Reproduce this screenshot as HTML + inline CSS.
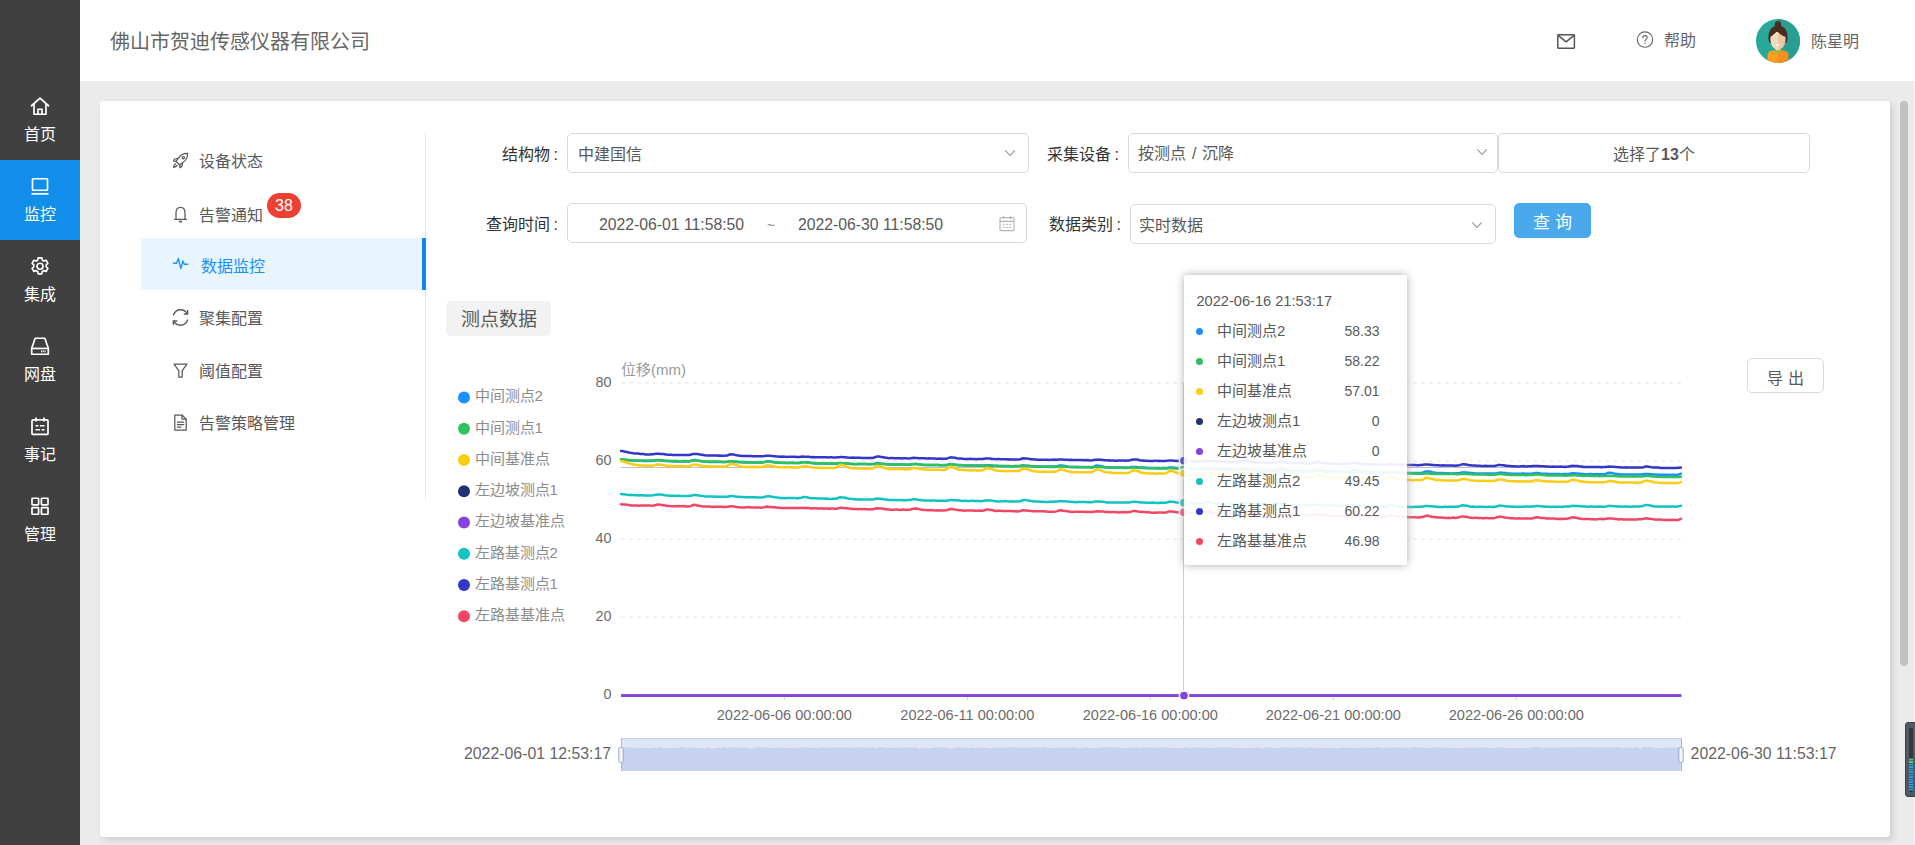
<!DOCTYPE html>
<html lang="zh-CN">
<head>
<meta charset="utf-8">
<title>数据监控</title>
<style>
*{box-sizing:border-box;margin:0;padding:0}
html,body{width:1915px;height:845px;overflow:hidden}
body{font-family:"Liberation Sans",sans-serif;background:#ebebeb;color:#595959;font-size:16px;position:relative}
.abs{position:absolute}
/* left dark rail */
#rail{position:absolute;left:0;top:0;width:80px;height:845px;background:#404040}
.ri{position:absolute;left:0;width:80px;height:80px;color:#fff;text-align:center}
.ri svg{position:absolute;left:30px;top:15.5px;width:20px;height:20.5px}
.ri span{position:absolute;left:0;width:80px;top:44px;font-size:16px;line-height:22px}
.ri.on{background:#108ee9}
/* header */
#hd{position:absolute;left:80px;top:0;width:1835px;height:81px;background:#fff}
#title{position:absolute;left:30px;top:27px;font-size:20px;line-height:30px;color:#666}

.ht{position:absolute;font-size:16px;line-height:22px;color:#666;white-space:nowrap}
/* card */
#card{position:absolute;left:100px;top:101px;width:1790px;height:736px;background:#fff;border-radius:3px;box-shadow:3px 3px 6px rgba(0,0,0,.13)}
/* inner menu */
#menu{position:absolute;left:41px;top:32px;width:285px;height:367px;border-right:1px solid #e8e8e8}
.mi{position:absolute;left:0;width:285px;height:52px;font-size:16px;color:#595959}
.mi svg{position:absolute;left:31px;top:19px;width:17px;height:17px}
.mi span{position:absolute;left:58px;top:18px;line-height:22px;white-space:nowrap}
.mi.on{background:#e9f5fe;color:#1890ff}
.mi.on:after{content:"";position:absolute;right:0;top:0;width:4px;height:52px;background:#1088e9}
.badge{position:absolute;left:126px;top:6px;width:34px;height:25px;border-radius:13px;background:#ee3f33;color:#fff;font-size:16px;line-height:25px;text-align:center}
/* form (coordinates are page-absolute, container #fx sits at 0,0) */
#fx{position:absolute;left:0;top:0;width:1915px;height:845px}
.lb{position:absolute;font-size:16px;color:#333;line-height:22px;text-align:right;width:120px;white-space:nowrap}
.sel{position:absolute;border:1px solid #d9d9d9;border-radius:5px;background:#fff;font-size:16px;color:#595959;white-space:nowrap}
.sel span{position:absolute;line-height:22px}
.chev{position:absolute;width:12px;height:8px}
.lb .c{font-style:normal;margin-left:4px}
.dt{font-size:15.75px}
.btn{position:absolute;border:1px solid #d9d9d9;border-radius:5px;background:#fff;font-size:16px;color:#595959;text-align:center;white-space:nowrap}
#tag{position:absolute;left:446px;top:301px;width:105px;height:35px;background:#f2f2f2;border-radius:5px;font-size:19px;line-height:37px;text-align:center;color:#595959}
/*TIPCSS*/
#tip{position:absolute;left:1184px;top:275px;width:223px;height:290px;background:rgba(255,255,255,.92);border-radius:3px;box-shadow:0 0 10px #aeaeae;font-size:14.4px;color:#595959}
#tip .tt{position:absolute;left:12.5px;top:16px;line-height:20px;font-size:14.6px;white-space:nowrap}
#tip .tr{position:absolute;left:0;width:223px;height:22px;line-height:22px;white-space:nowrap}
#tip .tr i{position:absolute;left:12px;top:7.5px;width:7px;height:7px;border-radius:50%}
#tip .tr span{position:absolute;left:33px;top:0;font-size:15px}
#tip .tr b{position:absolute;right:27.5px;top:0;font-weight:normal;font-size:14px}
/*/TIPCSS*/</style>
</head>
<body>
<div id="rail">
<div class="ri" style="top:80px"><svg viewBox="0 0 20 20" fill="none" stroke="#fff" stroke-width="1.7" stroke-linejoin="round" stroke-linecap="round"><path d="M1.5 9.5 L10 1.8 L18.5 9.5"/><path d="M4 8 V18 H16 V8"/><path d="M8 18 V13 H12 V18"/></svg><span>首页</span></div>
<div class="ri on" style="top:160px"><svg viewBox="0 0 20 20" fill="none" stroke="#fff" stroke-width="1.7" stroke-linejoin="round"><rect x="2.5" y="2.5" width="15" height="11.5" rx="0.8"/><path d="M1.5 17.6 H18.5"/></svg><span>监控</span></div>
<div class="ri" style="top:240px"><svg viewBox="0 0 20 20" fill="none" stroke="#fff" stroke-width="1.7" stroke-linejoin="round"><path d="M8.2 1.6 h3.6 l.5 2.3 1.6.9 2.2-.8 1.8 3.1-1.7 1.6 v1.8 l1.7 1.6-1.8 3.1-2.2-.8-1.6.9-.5 2.3 h-3.6 l-.5-2.3-1.6-.9-2.2.8-1.8-3.1 1.7-1.6 v-1.8 l-1.7-1.6 1.8-3.1 2.2.8 1.6-.9 z"/><circle cx="10" cy="10" r="3"/></svg><span>集成</span></div>
<div class="ri" style="top:320px"><svg viewBox="0 0 20 20" fill="none" stroke="#fff" stroke-width="1.7" stroke-linejoin="round"><path d="M5.2 2 H14.8 L18.3 12 V18 H1.7 V12 Z"/><path d="M1.7 12.2 H18.3"/><path d="M11 15.2 H15.5" stroke-width="1.8" stroke-dasharray="1.1 0.6"/></svg><span>网盘</span></div>
<div class="ri" style="top:400px"><svg viewBox="0 0 20 20" fill="none" stroke="#fff" stroke-width="1.7" stroke-linejoin="round"><rect x="2" y="3.6" width="16" height="14.6" rx="1"/><path d="M6 1.2 V5.2 M14 1.2 V5.2"/><path d="M5.5 9.6 H8.5 M10 9.6 H14.5 M5.5 13.4 H10 M11.5 13.4 H14.5" stroke-width="1.5"/></svg><span>事记</span></div>
<div class="ri" style="top:480px"><svg viewBox="0 0 20 20" fill="none" stroke="#fff" stroke-width="1.7" stroke-linejoin="round"><rect x="2" y="2" width="6.6" height="6.6" rx=".6"/><rect x="11.4" y="2" width="6.6" height="6.6" rx=".6"/><rect x="2" y="11.4" width="6.6" height="6.6" rx=".6"/><rect x="11.4" y="11.4" width="6.6" height="6.6" rx=".6"/></svg><span>管理</span></div>
</div>
<div id="hd"><div id="title">佛山市贺迪传感仪器有限公司</div>
<svg class="abs" style="left:1476px;top:33px;width:20px;height:17px" viewBox="0 0 20 17" fill="none" stroke="#555" stroke-width="1.5" stroke-linejoin="round"><rect x="1.8" y="1.8" width="16.6" height="13.4" rx=".6"/><path d="M2.2 2.4 L10.1 8.8 L18 2.4"/></svg>
<svg class="abs" style="left:1556px;top:31px;width:18px;height:18px" viewBox="0 0 18 18" fill="none" stroke="#666" stroke-width="1.1" stroke-linecap="round"><circle cx="9" cy="8.6" r="7.7"/><path d="M6.8 6.8 C6.8 5.4 7.8 4.6 9 4.6 C10.3 4.6 11.2 5.4 11.2 6.5 C11.2 8 9 8.2 9 10.2"/><path d="M9 12.4 V12.6" stroke-width="1.3"/></svg>
<div class="ht" style="left:1584px;top:30px">帮助</div>
<svg class="abs" style="left:1676px;top:19px;width:44px;height:44px" viewBox="0 0 44 44"><defs><clipPath id="av"><circle cx="22" cy="22" r="22"/></clipPath></defs><g clip-path="url(#av)"><rect width="44" height="44" fill="#2aa79b"/><rect x="22" width="22" height="44" fill="#289d92"/><circle cx="22" cy="5.2" r="3.2" fill="#4a2c20"/><path d="M12.4 19 C12.4 10.5 16.5 6.6 22 6.6 C27.5 6.6 31.6 10.5 31.6 19 C31.6 22 30.6 24 29.4 24 H14.6 C13.4 24 12.4 22 12.4 19 Z" fill="#4a2c20"/><rect x="19.4" y="27" width="5.2" height="6" fill="#e8c3a0"/><path d="M11.6 44 V36 C11.6 33 14 31.6 17 31.4 H22 V44 Z" fill="#f9a01f"/><path d="M32.4 44 V36 C32.4 33 30 31.6 27 31.4 H22 V44 Z" fill="#f58f1f"/><path d="M18 31.2 C19.4 33.6 24.6 33.6 26 31.2" fill="none" stroke="#6cc24a" stroke-width="1.3"/><path d="M14.4 20 C14.4 14.5 17 13 22 13 V30.6 C18 30.6 14.4 26.5 14.4 20 Z" fill="#f3d9bd"/><path d="M29.6 20 C29.6 14.5 27 13 22 13 V30.6 C26 30.6 29.6 26.5 29.6 20 Z" fill="#e9c6a5"/><path d="M14.2 18 C16 16.6 19 15 21 12 C23 15 27 17 29.8 18 C29.8 12 26 10 22 10 C18 10 14.2 12 14.2 18 Z" fill="#4a2c20"/><path d="M19.6 25.4 C20.6 27.2 23.4 27.2 24.4 25.4 Z" fill="#fff"/></g></svg>
<div class="ht" style="left:1731px;top:31px">陈星明</div>
</div>
<div id="card">
<div id="menu">
<div class="mi" style="top:0"><svg viewBox="0 0 17 17" fill="none" stroke="#595959" stroke-width="1.25" stroke-linejoin="round" stroke-linecap="round"><path d="M15.6 1.4 C11.5 1.2 8.2 3 6.2 6.6 L4 9.2 L7.8 13 L10.4 10.8 C14 8.8 15.8 5.5 15.6 1.4 Z"/><path d="M6.4 6.4 L2.6 7 L1.4 9 L4 9.4"/><path d="M10.6 10.6 L10 14.4 L8 15.6 L7.6 13"/><path d="M3.6 11.8 C2.4 12.4 1.8 13.6 1.6 15.4 C3.4 15.2 4.6 14.6 5.2 13.4"/><circle cx="11.3" cy="5.7" r="1.2"/></svg><span>设备状态</span></div>
<div class="mi" style="top:54px"><svg viewBox="0 0 17 17" fill="none" stroke="#595959" stroke-width="1.25" stroke-linejoin="round" stroke-linecap="round"><path d="M4 13.4 V7 C4 3.6 5.8 1.4 8.5 1.4 C11.2 1.4 13 3.6 13 7 V13.4"/><path d="M2.6 13.4 H14.4"/><path d="M7.5 15.6 H9.5" stroke-width="1.6"/></svg><span>告警通知</span><div class="badge">38</div></div>
<div class="mi on" style="top:105px"><svg style="top:17px" viewBox="0 0 17 17" fill="none" stroke="#1890ff" stroke-width="1.35" stroke-linejoin="round" stroke-linecap="round"><path d="M1.6 8.2 H4.6 L6.4 3.4 L8.8 13.6 L10.9 6 L12.2 9.2 H15.8"/></svg><span style="left:60px">数据监控</span></div>
<div class="mi" style="top:157px"><svg viewBox="0 0 17 17" fill="none" stroke="#595959" stroke-width="1.25" stroke-linejoin="round" stroke-linecap="round" style="left:30px;top:18px;width:19px;height:19px"><path d="M2.2 6.2 C3.2 3.4 5.6 1.6 8.5 1.6 C11.2 1.6 13.4 3 14.6 5.2"/><path d="M14.8 10.8 C13.8 13.6 11.4 15.4 8.5 15.4 C5.8 15.4 3.6 14 2.4 11.8"/><path d="M14.9 2.4 V5.4 H11.9"/><path d="M2.1 14.6 V11.6 H5.1"/></svg><span>聚集配置</span></div>
<div class="mi" style="top:210px"><svg viewBox="0 0 17 17" fill="none" stroke="#595959" stroke-width="1.25" stroke-linejoin="round" stroke-linecap="round"><path d="M2 2.2 H15 L10.2 8.6 V15 H6.8 V8.6 Z"/></svg><span>阈值配置</span></div>
<div class="mi" style="top:262px"><svg viewBox="0 0 17 17" fill="none" stroke="#595959" stroke-width="1.25" stroke-linejoin="round" stroke-linecap="round"><path d="M2.8 1 H10 L14.2 5.2 V16 H2.8 Z"/><path d="M10 1 V5.2 H14.2"/><path d="M5.4 8.2 H11.6 M5.4 10.6 H11.6 M5.4 13 H9"/></svg><span>告警策略管理</span></div>
</div>
</div>
<div id="fx">
<div class="lb" style="left:438px;top:144px">结构物<i class="c">:</i></div>
<div class="sel" style="left:567px;top:133px;width:462px;height:40px"><span style="left:10px;top:10px">中建国信</span><svg class="chev" style="left:436px;top:15px" viewBox="0 0 12 8" fill="none" stroke="#999" stroke-width="1.1"><path d="M1.2 1.4 L6 6.4 L10.8 1.4"/></svg></div>
<div class="lb" style="left:999px;top:144px">采集设备<i class="c">:</i></div>
<div class="sel" style="left:1128px;top:133px;width:370px;height:40px"><span style="left:9px;top:9px;word-spacing:1.5px">按测点 / 沉降</span><svg class="chev" style="left:347px;top:14px" viewBox="0 0 12 8" fill="none" stroke="#999" stroke-width="1.1"><path d="M1.2 1.4 L6 6.4 L10.8 1.4"/></svg></div>
<div class="btn" style="left:1498px;top:133px;width:312px;height:40px;line-height:42px">选择了<b style="font-weight:600">13</b>个</div>
<div class="lb" style="left:438px;top:214px">查询时间<i class="c">:</i></div>
<div class="sel" style="left:567px;top:203px;width:460px;height:40px"><span class="dt" style="left:31px;top:10px">2022-06-01 11:58:50</span><span style="left:199px;top:10px;color:#8c8c8c;font-size:14px">~</span><span class="dt" style="left:230px;top:10px">2022-06-30 11:58:50</span>
<svg class="abs" style="left:431px;top:11px;width:16px;height:17px" viewBox="0 0 16 17" fill="none" stroke="#b3b3b3" stroke-width="1.1"><rect x="1" y="2.6" width="14" height="13" rx="1"/><path d="M1 6.4 H15 M4.6 .8 V4 M11.4 .8 V4"/><path d="M4 9.4 H5.6 M7.2 9.4 H8.8 M10.4 9.4 H12 M4 12.4 H5.6 M7.2 12.4 H8.8 M10.4 12.4 H12" stroke-width="1.2"/></svg></div>
<div class="lb" style="left:1001px;top:214px">数据类别<i class="c">:</i></div>
<div class="sel" style="left:1130px;top:204px;width:366px;height:40px"><span style="left:8px;top:10px">实时数据</span><svg class="chev" style="left:340px;top:16px" viewBox="0 0 12 8" fill="none" stroke="#999" stroke-width="1.1"><path d="M1.2 1.4 L6 6.4 L10.8 1.4"/></svg></div>
<div class="btn" style="left:1514px;top:203px;width:77px;height:35px;line-height:37px;background:#4aa8ed;border-color:#4aa8ed;color:#fff;font-size:17px">查 询</div>
<div id="tag">测点数据</div>
<div class="btn" style="left:1747px;top:358px;width:77px;height:35px;line-height:40px">导 出</div>
</div>
<div class="abs" style="left:1914px;top:81px;width:1px;height:764px;background:#f6f6f6"></div>
<div class="abs" style="left:1900px;top:101px;width:8px;height:565px;border-radius:4px;background:#c1c1c1"></div>
<div class="abs" style="left:1905px;top:722px;width:14px;height:75px;border-radius:3px;background:#505a64;border:1px solid #3a424b"></div>
<div class="abs" style="left:1909px;top:728px;width:4px;height:64px;border-radius:1px;background:#2e333b"></div>
<svg class="abs" style="left:1909px;top:728px;width:4px;height:64px" viewBox="0 0 4 64"><rect x="0" y="0.60" width="4" height="1.9" fill="#353b44"/><rect x="0" y="3.10" width="4" height="1.9" fill="#353b44"/><rect x="0" y="5.60" width="4" height="1.9" fill="#353b44"/><rect x="0" y="8.10" width="4" height="1.9" fill="#353b44"/><rect x="0" y="10.60" width="4" height="1.9" fill="#353b44"/><rect x="0" y="13.10" width="4" height="1.9" fill="#353b44"/><rect x="0" y="15.60" width="4" height="1.9" fill="#353b44"/><rect x="0" y="18.10" width="4" height="1.9" fill="#353b44"/><rect x="0" y="20.60" width="4" height="1.9" fill="#353b44"/><rect x="0" y="23.10" width="4" height="1.9" fill="#353b44"/><rect x="0" y="25.60" width="4" height="1.9" fill="#353b44"/><rect x="0" y="28.10" width="4" height="1.9" fill="#353b44"/><rect x="0" y="30.60" width="4" height="1.9" fill="#62c08f"/><rect x="0" y="33.10" width="4" height="1.9" fill="#62c08f"/><rect x="0" y="35.60" width="4" height="1.9" fill="#2f9fe2"/><rect x="0" y="38.10" width="4" height="1.9" fill="#2f9fe2"/><rect x="0" y="40.60" width="4" height="1.9" fill="#2f9fe2"/><rect x="0" y="43.10" width="4" height="1.9" fill="#2f9fe2"/><rect x="0" y="45.60" width="4" height="1.9" fill="#2f9fe2"/><rect x="0" y="48.10" width="4" height="1.9" fill="#2f9fe2"/><rect x="0" y="50.60" width="4" height="1.9" fill="#2f9fe2"/><rect x="0" y="53.10" width="4" height="1.9" fill="#2f9fe2"/><rect x="0" y="55.60" width="4" height="1.9" fill="#2f9fe2"/><rect x="0" y="58.10" width="4" height="1.9" fill="#2f9fe2"/><rect x="0" y="60.60" width="4" height="1.9" fill="#2f9fe2"/></svg>








<!--CHART--><svg id="chart" class="abs" style="left:0;top:0" width="1915" height="845" viewBox="0 0 1915 845" font-family="Liberation Sans, sans-serif">
<g font-size="15" fill="#8c8c8c">
<circle cx="464" cy="397.4" r="6" fill="#1890ff"/><text x="474.5" y="401.2">中间测点2</text>
<circle cx="464" cy="428.7" r="6" fill="#2fc25b"/><text x="474.5" y="432.5">中间测点1</text>
<circle cx="464" cy="459.9" r="6" fill="#facc14"/><text x="474.5" y="463.7">中间基准点</text>
<circle cx="464" cy="491.2" r="6" fill="#223273"/><text x="474.5" y="495.0">左边坡测点1</text>
<circle cx="464" cy="522.5" r="6" fill="#8543e0"/><text x="474.5" y="526.3">左边坡基准点</text>
<circle cx="464" cy="553.8" r="6" fill="#13c2c2"/><text x="474.5" y="557.5">左路基测点2</text>
<circle cx="464" cy="585.0" r="6" fill="#3436c7"/><text x="474.5" y="588.8">左路基测点1</text>
<circle cx="464" cy="616.3" r="6" fill="#f04864"/><text x="474.5" y="620.1">左路基基准点</text>
</g>
<text x="621" y="374.7" font-size="15" fill="#999">位移(mm)</text>
<g stroke="#e4e4e4" stroke-width="1" stroke-dasharray="4 4" fill="none">
<path d="M621 382.9 H1681"/>
<path d="M621 461.0 H1681"/>
<path d="M621 539.1 H1681"/>
<path d="M621 617.2 H1681"/>
</g>
<g font-size="14.4" fill="#6b6b6b" text-anchor="end">
<text x="611.5" y="387.2">80</text>
<text x="611.5" y="465.2">60</text>
<text x="611.5" y="543.2">40</text>
<text x="611.5" y="621.2">20</text>
<text x="611.5" y="699.2">0</text>
</g>
<path d="M621 695.5 H1681" stroke="#ccc" stroke-width="1"/>
<g stroke="#ccc" stroke-width="1">
<path d="M784.3 695 V700"/>
<path d="M967.3 695 V700"/>
<path d="M1150.3 695 V700"/>
<path d="M1333.3 695 V700"/>
<path d="M1516.3 695 V700"/>
</g>
<g font-size="14.55" fill="#6b6b6b" text-anchor="middle">
<text x="784.3" y="719.6">2022-06-06 00:00:00</text>
<text x="967.3" y="719.6">2022-06-11 00:00:00</text>
<text x="1150.3" y="719.6">2022-06-16 00:00:00</text>
<text x="1333.3" y="719.6">2022-06-21 00:00:00</text>
<text x="1516.3" y="719.6">2022-06-26 00:00:00</text>
</g>
<path d="M621 467.5 H1681" stroke="#bfbfbf" stroke-width="1"/>
<path d="M1183.5 383 V695" stroke="#ccc" stroke-width="1"/>
<g fill="none" stroke-width="2.5" stroke-linejoin="round" stroke-linecap="round" transform="translate(0,0.7)">
<path d="M621.0 458.7 L622.5 458.7 L624.0 458.9 L625.6 459.2 L627.1 459.4 L628.6 459.6 L630.1 459.8 L631.7 459.8 L633.2 459.9 L634.7 460.0 L636.2 460.1 L637.8 460.0 L639.3 460.1 L640.8 460.1 L642.3 460.2 L643.9 460.2 L645.4 460.2 L646.9 460.3 L648.4 460.2 L650.0 460.2 L651.5 460.3 L653.0 460.1 L654.5 460.0 L656.1 459.6 L657.6 459.6 L659.1 459.7 L660.6 459.8 L662.2 460.0 L663.7 460.1 L665.2 460.3 L666.7 460.4 L668.3 460.5 L669.8 460.5 L671.3 460.6 L672.8 460.7 L674.4 460.7 L675.9 460.7 L677.4 460.6 L678.9 460.7 L680.5 460.7 L682.0 460.9 L683.5 460.9 L685.0 460.8 L686.6 460.8 L688.1 460.8 L689.6 460.6 L691.1 460.3 L692.7 459.7 L694.2 459.4 L695.7 459.4 L697.2 459.8 L698.8 460.0 L700.3 460.2 L701.8 460.5 L703.3 460.8 L704.9 460.8 L706.4 461.0 L707.9 461.1 L709.4 461.2 L711.0 461.3 L712.5 461.3 L714.0 461.2 L715.5 461.2 L717.1 461.2 L718.6 461.3 L720.1 461.4 L721.6 461.3 L723.2 461.2 L724.7 461.2 L726.2 461.2 L727.7 461.1 L729.3 460.9 L730.8 460.7 L732.3 460.7 L733.8 460.9 L735.4 461.0 L736.9 461.2 L738.4 461.5 L739.9 461.6 L741.5 461.6 L743.0 461.7 L744.5 461.7 L746.0 461.6 L747.6 461.8 L749.1 461.8 L750.6 461.9 L752.1 461.9 L753.7 461.8 L755.2 461.8 L756.7 461.7 L758.2 461.8 L759.8 461.8 L761.3 461.7 L762.8 461.6 L764.3 461.3 L765.9 460.9 L767.4 460.6 L768.9 460.6 L770.4 460.8 L772.0 461.1 L773.5 461.4 L775.0 461.5 L776.5 461.9 L778.1 462.1 L779.6 462.0 L781.1 462.1 L782.6 462.1 L784.2 462.2 L785.7 462.1 L787.2 462.3 L788.7 462.4 L790.3 462.4 L791.8 462.4 L793.3 462.3 L794.8 462.3 L796.4 462.3 L797.9 462.3 L799.4 462.4 L800.9 462.1 L802.5 461.6 L804.0 461.5 L805.5 461.6 L807.0 461.7 L808.6 461.9 L810.1 462.0 L811.6 462.3 L813.1 462.6 L814.7 462.7 L816.2 462.8 L817.7 462.7 L819.2 462.7 L820.8 462.7 L822.3 462.8 L823.8 462.9 L825.3 462.9 L826.9 462.9 L828.4 462.8 L829.9 463.0 L831.4 463.1 L833.0 463.1 L834.5 463.1 L836.0 463.1 L837.5 462.9 L839.1 462.6 L840.6 462.4 L842.1 462.5 L843.6 462.5 L845.2 462.5 L846.7 462.7 L848.2 462.8 L849.7 463.1 L851.3 463.3 L852.8 463.2 L854.3 463.4 L855.8 463.5 L857.4 463.5 L858.9 463.4 L860.4 463.3 L861.9 463.3 L863.5 463.3 L865.0 463.3 L866.5 463.4 L868.0 463.5 L869.6 463.6 L871.1 463.5 L872.6 463.5 L874.1 463.2 L875.7 462.6 L877.2 462.4 L878.7 462.5 L880.2 462.7 L881.8 463.0 L883.3 463.1 L884.8 463.2 L886.3 463.5 L887.9 463.6 L889.4 463.7 L890.9 463.9 L892.4 463.8 L894.0 463.8 L895.5 463.9 L897.0 463.9 L898.5 463.8 L900.1 463.8 L901.6 463.8 L903.1 463.9 L904.6 464.0 L906.2 463.9 L907.7 464.0 L909.2 464.1 L910.7 463.9 L912.3 463.6 L913.8 463.5 L915.3 463.4 L916.8 463.4 L918.4 463.8 L919.9 463.9 L921.4 464.0 L922.9 464.2 L924.5 464.2 L926.0 464.3 L927.5 464.4 L929.0 464.3 L930.6 464.2 L932.1 464.2 L933.6 464.2 L935.1 464.3 L936.7 464.3 L938.2 464.3 L939.7 464.3 L941.2 464.5 L942.8 464.4 L944.3 464.4 L945.8 464.4 L947.3 464.2 L948.9 463.7 L950.4 463.6 L951.9 463.6 L953.4 463.7 L955.0 463.9 L956.5 464.0 L958.0 464.2 L959.5 464.4 L961.1 464.4 L962.6 464.6 L964.1 464.6 L965.6 464.7 L967.2 464.8 L968.7 464.8 L970.2 464.8 L971.7 464.8 L973.3 464.9 L974.8 465.0 L976.3 464.8 L977.8 464.9 L979.4 464.9 L980.9 464.9 L982.4 464.9 L983.9 464.8 L985.5 464.5 L987.0 464.5 L988.5 464.6 L990.0 464.6 L991.6 464.7 L993.1 464.9 L994.6 465.0 L996.1 465.1 L997.7 465.1 L999.2 465.2 L1000.7 465.2 L1002.2 465.4 L1003.8 465.4 L1005.3 465.4 L1006.8 465.5 L1008.3 465.4 L1009.9 465.4 L1011.4 465.5 L1012.9 465.5 L1014.4 465.4 L1016.0 465.3 L1017.5 465.4 L1019.0 465.3 L1020.5 465.1 L1022.1 464.8 L1023.6 464.8 L1025.1 465.0 L1026.6 465.1 L1028.2 465.1 L1029.7 465.3 L1031.2 465.5 L1032.7 465.5 L1034.3 465.7 L1035.8 465.8 L1037.3 465.7 L1038.8 465.9 L1040.4 465.8 L1041.9 465.8 L1043.4 465.9 L1044.9 466.0 L1046.5 465.8 L1048.0 465.8 L1049.5 465.9 L1051.0 465.9 L1052.6 465.8 L1054.1 465.8 L1055.6 465.9 L1057.1 465.5 L1058.7 465.1 L1060.2 464.9 L1061.7 464.9 L1063.2 465.0 L1064.8 465.3 L1066.3 465.6 L1067.8 465.7 L1069.3 466.0 L1070.9 466.2 L1072.4 466.3 L1073.9 466.2 L1075.4 466.2 L1077.0 466.1 L1078.5 466.3 L1080.0 466.2 L1081.5 466.2 L1083.1 466.3 L1084.6 466.4 L1086.1 466.5 L1087.6 466.4 L1089.2 466.3 L1090.7 466.5 L1092.2 466.4 L1093.7 466.0 L1095.3 465.2 L1096.8 464.8 L1098.3 465.0 L1099.8 465.2 L1101.4 465.4 L1102.9 465.9 L1104.4 466.2 L1105.9 466.5 L1107.5 466.5 L1109.0 466.7 L1110.5 466.6 L1112.0 466.8 L1113.6 466.8 L1115.1 466.7 L1116.6 466.8 L1118.1 466.9 L1119.7 466.8 L1121.2 466.8 L1122.7 466.8 L1124.2 466.8 L1125.8 466.8 L1127.3 466.8 L1128.8 466.7 L1130.4 466.6 L1131.9 466.3 L1133.4 466.2 L1134.9 466.4 L1136.5 466.4 L1138.0 466.6 L1139.5 466.7 L1141.0 466.8 L1142.6 466.8 L1144.1 466.9 L1145.6 467.0 L1147.1 467.1 L1148.7 467.2 L1150.2 467.2 L1151.7 467.2 L1153.2 467.4 L1154.8 467.2 L1156.3 467.4 L1157.8 467.4 L1159.3 467.4 L1160.9 467.5 L1162.4 467.4 L1163.9 467.4 L1165.4 467.4 L1167.0 467.3 L1168.5 466.9 L1170.0 466.8 L1171.5 466.8 L1173.1 466.9 L1174.6 467.0 L1176.1 467.2 L1177.6 467.2 L1179.2 467.3 L1180.7 467.4 L1182.2 467.6 L1183.7 467.6 L1185.3 467.6 L1186.8 467.6 L1188.3 467.8 L1189.8 467.9 L1191.4 467.9 L1192.9 467.9 L1194.4 467.8 L1195.9 467.9 L1197.5 467.9 L1199.0 467.9 L1200.5 467.9 L1202.0 467.8 L1203.6 467.7 L1205.1 467.2 L1206.6 466.9 L1208.1 466.9 L1209.7 467.2 L1211.2 467.4 L1212.7 467.6 L1214.2 467.8 L1215.8 468.0 L1217.3 468.2 L1218.8 468.3 L1220.3 468.3 L1221.9 468.4 L1223.4 468.3 L1224.9 468.4 L1226.4 468.4 L1228.0 468.5 L1229.5 468.4 L1231.0 468.4 L1232.5 468.5 L1234.1 468.6 L1235.6 468.7 L1237.1 468.7 L1238.6 468.7 L1240.2 468.3 L1241.7 467.6 L1243.2 467.3 L1244.7 467.3 L1246.3 467.5 L1247.8 467.9 L1249.3 468.2 L1250.8 468.5 L1252.4 468.8 L1253.9 468.9 L1255.4 469.1 L1256.9 469.3 L1258.5 469.3 L1260.0 469.3 L1261.5 469.4 L1263.0 469.3 L1264.6 469.3 L1266.1 469.4 L1267.6 469.5 L1269.1 469.5 L1270.7 469.6 L1272.2 469.6 L1273.7 469.6 L1275.2 469.5 L1276.8 469.2 L1278.3 468.6 L1279.8 468.2 L1281.3 468.3 L1282.9 468.5 L1284.4 468.7 L1285.9 469.2 L1287.4 469.4 L1289.0 469.6 L1290.5 469.8 L1292.0 469.9 L1293.5 469.9 L1295.1 469.8 L1296.6 470.0 L1298.1 470.1 L1299.6 470.1 L1301.2 470.1 L1302.7 470.1 L1304.2 470.0 L1305.7 470.2 L1307.3 470.1 L1308.8 470.1 L1310.3 470.1 L1311.8 470.2 L1313.4 469.9 L1314.9 469.5 L1316.4 469.4 L1317.9 469.4 L1319.5 469.6 L1321.0 469.8 L1322.5 470.0 L1324.0 470.3 L1325.6 470.4 L1327.1 470.6 L1328.6 470.5 L1330.1 470.5 L1331.7 470.5 L1333.2 470.7 L1334.7 470.7 L1336.2 470.8 L1337.8 470.7 L1339.3 470.7 L1340.8 470.7 L1342.3 470.9 L1343.9 471.0 L1345.4 471.0 L1346.9 470.9 L1348.4 470.8 L1350.0 470.4 L1351.5 469.7 L1353.0 469.2 L1354.5 469.5 L1356.1 469.6 L1357.6 470.1 L1359.1 470.5 L1360.6 470.7 L1362.2 470.9 L1363.7 471.2 L1365.2 471.4 L1366.7 471.4 L1368.3 471.4 L1369.8 471.4 L1371.3 471.5 L1372.8 471.5 L1374.4 471.5 L1375.9 471.5 L1377.4 471.6 L1378.9 471.7 L1380.5 471.6 L1382.0 471.8 L1383.5 471.7 L1385.0 471.8 L1386.6 471.7 L1388.1 471.3 L1389.6 471.3 L1391.1 471.3 L1392.7 471.3 L1394.2 471.4 L1395.7 471.6 L1397.2 471.8 L1398.8 471.8 L1400.3 471.9 L1401.8 472.0 L1403.3 472.0 L1404.9 472.2 L1406.4 472.1 L1407.9 472.2 L1409.4 472.3 L1411.0 472.2 L1412.5 472.3 L1414.0 472.3 L1415.5 472.4 L1417.1 472.3 L1418.6 472.3 L1420.1 472.2 L1421.6 472.3 L1423.2 471.8 L1424.7 471.1 L1426.2 470.7 L1427.7 470.7 L1429.3 470.8 L1430.8 471.1 L1432.3 471.6 L1433.8 471.8 L1435.4 472.2 L1436.9 472.2 L1438.4 472.3 L1439.9 472.4 L1441.5 472.3 L1443.0 472.4 L1444.5 472.5 L1446.0 472.6 L1447.6 472.6 L1449.1 472.6 L1450.6 472.7 L1452.1 472.7 L1453.7 472.6 L1455.2 472.7 L1456.7 472.5 L1458.2 472.5 L1459.8 472.3 L1461.3 471.9 L1462.8 471.7 L1464.3 471.7 L1465.9 471.7 L1467.4 472.1 L1468.9 472.1 L1470.4 472.3 L1472.0 472.4 L1473.5 472.5 L1475.0 472.7 L1476.5 472.8 L1478.1 472.7 L1479.6 472.8 L1481.1 472.7 L1482.6 472.8 L1484.2 472.7 L1485.7 472.7 L1487.2 472.7 L1488.7 472.7 L1490.3 472.8 L1491.8 472.8 L1493.3 472.8 L1494.8 472.8 L1496.4 472.7 L1497.9 472.4 L1499.4 472.1 L1500.9 472.1 L1502.5 472.1 L1504.0 472.3 L1505.5 472.4 L1507.0 472.6 L1508.6 472.7 L1510.1 472.8 L1511.6 473.0 L1513.1 473.1 L1514.7 473.0 L1516.2 473.0 L1517.7 473.0 L1519.2 473.0 L1520.8 473.0 L1522.3 472.9 L1523.8 472.9 L1525.3 473.1 L1526.9 473.0 L1528.4 473.1 L1529.9 473.1 L1531.4 473.1 L1533.0 472.8 L1534.5 472.5 L1536.0 472.3 L1537.5 472.4 L1539.1 472.5 L1540.6 472.8 L1542.1 473.0 L1543.6 473.1 L1545.2 473.0 L1546.7 473.0 L1548.2 473.2 L1549.7 473.3 L1551.3 473.3 L1552.8 473.3 L1554.3 473.2 L1555.8 473.2 L1557.4 473.4 L1558.9 473.4 L1560.4 473.5 L1561.9 473.5 L1563.5 473.4 L1565.0 473.3 L1566.5 473.2 L1568.0 473.2 L1569.6 473.1 L1571.1 472.8 L1572.6 472.6 L1574.1 472.6 L1575.7 472.8 L1577.2 472.9 L1578.7 473.0 L1580.2 473.1 L1581.8 473.3 L1583.3 473.3 L1584.8 473.5 L1586.3 473.6 L1587.9 473.5 L1589.4 473.4 L1590.9 473.4 L1592.4 473.5 L1594.0 473.6 L1595.5 473.5 L1597.0 473.4 L1598.5 473.5 L1600.1 473.6 L1601.6 473.6 L1603.1 473.5 L1604.6 473.5 L1606.2 473.0 L1607.7 472.3 L1609.2 472.0 L1610.7 472.2 L1612.3 472.4 L1613.8 472.8 L1615.3 473.0 L1616.8 473.2 L1618.4 473.4 L1619.9 473.7 L1621.4 473.8 L1622.9 473.7 L1624.5 473.7 L1626.0 473.7 L1627.5 473.8 L1629.0 473.8 L1630.6 473.8 L1632.1 473.9 L1633.6 474.0 L1635.1 473.9 L1636.7 473.8 L1638.2 473.8 L1639.7 473.8 L1641.2 473.8 L1642.8 473.6 L1644.3 473.4 L1645.8 473.2 L1647.3 473.2 L1648.9 473.3 L1650.4 473.6 L1651.9 473.6 L1653.4 473.8 L1655.0 473.8 L1656.5 473.9 L1658.0 474.0 L1659.5 474.0 L1661.1 474.1 L1662.6 474.1 L1664.1 474.0 L1665.6 474.0 L1667.2 474.0 L1668.7 474.1 L1670.2 474.2 L1671.7 474.1 L1673.3 474.1 L1674.8 474.1 L1676.3 474.2 L1677.8 474.0 L1679.4 473.6 L1680.9 473.0" stroke="#1890ff"/>
<path d="M621.0 458.9 L622.5 458.9 L624.0 459.0 L625.6 459.2 L627.1 459.3 L628.6 459.3 L630.1 459.3 L631.7 459.4 L633.2 459.6 L634.7 459.6 L636.2 459.7 L637.8 459.8 L639.3 459.7 L640.8 459.7 L642.3 459.8 L643.9 459.8 L645.4 459.8 L646.9 459.9 L648.4 459.8 L650.0 459.8 L651.5 459.8 L653.0 459.8 L654.5 459.7 L656.1 459.4 L657.6 459.3 L659.1 459.2 L660.6 459.3 L662.2 459.5 L663.7 459.8 L665.2 460.0 L666.7 460.0 L668.3 460.1 L669.8 460.1 L671.3 460.2 L672.8 460.3 L674.4 460.3 L675.9 460.3 L677.4 460.4 L678.9 460.5 L680.5 460.5 L682.0 460.5 L683.5 460.4 L685.0 460.4 L686.6 460.4 L688.1 460.5 L689.6 460.4 L691.1 460.2 L692.7 459.9 L694.2 459.7 L695.7 459.7 L697.2 459.8 L698.8 460.1 L700.3 460.2 L701.8 460.5 L703.3 460.7 L704.9 460.8 L706.4 460.8 L707.9 460.7 L709.4 460.7 L711.0 460.8 L712.5 460.9 L714.0 460.9 L715.5 460.9 L717.1 460.9 L718.6 461.0 L720.1 461.1 L721.6 461.1 L723.2 461.2 L724.7 461.2 L726.2 461.0 L727.7 460.9 L729.3 460.6 L730.8 460.5 L732.3 460.5 L733.8 460.7 L735.4 460.7 L736.9 460.9 L738.4 461.0 L739.9 461.1 L741.5 461.3 L743.0 461.4 L744.5 461.4 L746.0 461.4 L747.6 461.6 L749.1 461.5 L750.6 461.5 L752.1 461.6 L753.7 461.6 L755.2 461.7 L756.7 461.6 L758.2 461.6 L759.8 461.7 L761.3 461.8 L762.8 461.8 L764.3 461.4 L765.9 461.0 L767.4 460.8 L768.9 460.8 L770.4 461.1 L772.0 461.3 L773.5 461.6 L775.0 461.7 L776.5 461.9 L778.1 461.9 L779.6 461.9 L781.1 462.1 L782.6 462.2 L784.2 462.1 L785.7 462.1 L787.2 462.2 L788.7 462.1 L790.3 462.1 L791.8 462.1 L793.3 462.1 L794.8 462.2 L796.4 462.2 L797.9 462.3 L799.4 462.2 L800.9 461.9 L802.5 461.6 L804.0 461.5 L805.5 461.5 L807.0 461.7 L808.6 461.8 L810.1 462.1 L811.6 462.3 L813.1 462.3 L814.7 462.4 L816.2 462.5 L817.7 462.6 L819.2 462.7 L820.8 462.6 L822.3 462.6 L823.8 462.7 L825.3 462.7 L826.9 462.7 L828.4 462.7 L829.9 462.9 L831.4 462.8 L833.0 462.9 L834.5 462.9 L836.0 462.8 L837.5 462.8 L839.1 462.7 L840.6 462.5 L842.1 462.5 L843.6 462.7 L845.2 462.7 L846.7 462.7 L848.2 463.0 L849.7 463.0 L851.3 463.2 L852.8 463.2 L854.3 463.3 L855.8 463.2 L857.4 463.2 L858.9 463.1 L860.4 463.2 L861.9 463.3 L863.5 463.4 L865.0 463.3 L866.5 463.4 L868.0 463.4 L869.6 463.4 L871.1 463.4 L872.6 463.3 L874.1 463.3 L875.7 463.3 L877.2 463.1 L878.7 463.2 L880.2 463.3 L881.8 463.5 L883.3 463.4 L884.8 463.4 L886.3 463.6 L887.9 463.8 L889.4 463.8 L890.9 463.7 L892.4 463.8 L894.0 463.8 L895.5 463.9 L897.0 463.9 L898.5 463.9 L900.1 463.9 L901.6 463.9 L903.1 463.9 L904.6 463.9 L906.2 464.0 L907.7 464.1 L909.2 463.9 L910.7 463.7 L912.3 463.3 L913.8 463.2 L915.3 463.2 L916.8 463.3 L918.4 463.5 L919.9 463.8 L921.4 464.0 L922.9 464.0 L924.5 464.1 L926.0 464.3 L927.5 464.2 L929.0 464.3 L930.6 464.3 L932.1 464.3 L933.6 464.4 L935.1 464.4 L936.7 464.4 L938.2 464.4 L939.7 464.5 L941.2 464.5 L942.8 464.5 L944.3 464.5 L945.8 464.5 L947.3 464.2 L948.9 464.0 L950.4 463.8 L951.9 463.9 L953.4 464.1 L955.0 464.3 L956.5 464.4 L958.0 464.5 L959.5 464.6 L961.1 464.6 L962.6 464.6 L964.1 464.7 L965.6 464.7 L967.2 464.8 L968.7 464.9 L970.2 464.8 L971.7 464.9 L973.3 464.9 L974.8 465.0 L976.3 465.1 L977.8 465.1 L979.4 465.0 L980.9 465.0 L982.4 465.0 L983.9 465.1 L985.5 464.9 L987.0 464.9 L988.5 465.0 L990.0 465.1 L991.6 465.2 L993.1 465.1 L994.6 465.3 L996.1 465.3 L997.7 465.4 L999.2 465.5 L1000.7 465.4 L1002.2 465.5 L1003.8 465.5 L1005.3 465.4 L1006.8 465.4 L1008.3 465.5 L1009.9 465.5 L1011.4 465.6 L1012.9 465.5 L1014.4 465.6 L1016.0 465.6 L1017.5 465.6 L1019.0 465.6 L1020.5 465.4 L1022.1 465.1 L1023.6 465.0 L1025.1 465.0 L1026.6 465.1 L1028.2 465.2 L1029.7 465.3 L1031.2 465.6 L1032.7 465.8 L1034.3 465.9 L1035.8 465.8 L1037.3 466.0 L1038.8 465.9 L1040.4 465.9 L1041.9 466.0 L1043.4 466.0 L1044.9 466.1 L1046.5 466.1 L1048.0 466.1 L1049.5 466.2 L1051.0 466.1 L1052.6 466.2 L1054.1 466.2 L1055.6 466.2 L1057.1 466.1 L1058.7 465.8 L1060.2 465.8 L1061.7 465.8 L1063.2 465.9 L1064.8 466.0 L1066.3 466.1 L1067.8 466.2 L1069.3 466.3 L1070.9 466.3 L1072.4 466.4 L1073.9 466.4 L1075.4 466.5 L1077.0 466.6 L1078.5 466.6 L1080.0 466.6 L1081.5 466.6 L1083.1 466.5 L1084.6 466.5 L1086.1 466.5 L1087.6 466.6 L1089.2 466.6 L1090.7 466.7 L1092.2 466.8 L1093.7 466.5 L1095.3 466.3 L1096.8 466.3 L1098.3 466.2 L1099.8 466.3 L1101.4 466.4 L1102.9 466.5 L1104.4 466.7 L1105.9 466.7 L1107.5 466.9 L1109.0 467.0 L1110.5 466.9 L1112.0 467.0 L1113.6 467.0 L1115.1 467.0 L1116.6 467.1 L1118.1 467.1 L1119.7 467.1 L1121.2 467.0 L1122.7 467.2 L1124.2 467.3 L1125.8 467.3 L1127.3 467.3 L1128.8 467.2 L1130.4 467.0 L1131.9 466.9 L1133.4 466.9 L1134.9 466.9 L1136.5 467.0 L1138.0 467.1 L1139.5 467.3 L1141.0 467.4 L1142.6 467.4 L1144.1 467.5 L1145.6 467.5 L1147.1 467.5 L1148.7 467.5 L1150.2 467.5 L1151.7 467.5 L1153.2 467.6 L1154.8 467.6 L1156.3 467.6 L1157.8 467.8 L1159.3 467.7 L1160.9 467.7 L1162.4 467.8 L1163.9 467.8 L1165.4 467.8 L1167.0 467.8 L1168.5 467.5 L1170.0 467.5 L1171.5 467.5 L1173.1 467.5 L1174.6 467.7 L1176.1 467.9 L1177.6 468.0 L1179.2 467.9 L1180.7 468.1 L1182.2 468.1 L1183.7 468.1 L1185.3 468.2 L1186.8 468.2 L1188.3 468.1 L1189.8 468.1 L1191.4 468.2 L1192.9 468.1 L1194.4 468.2 L1195.9 468.4 L1197.5 468.4 L1199.0 468.5 L1200.5 468.5 L1202.0 468.5 L1203.6 468.4 L1205.1 468.3 L1206.6 468.4 L1208.1 468.4 L1209.7 468.4 L1211.2 468.5 L1212.7 468.7 L1214.2 468.7 L1215.8 468.8 L1217.3 468.7 L1218.8 468.8 L1220.3 468.8 L1221.9 468.9 L1223.4 469.0 L1224.9 469.1 L1226.4 469.0 L1228.0 469.1 L1229.5 469.1 L1231.0 469.1 L1232.5 469.2 L1234.1 469.2 L1235.6 469.3 L1237.1 469.3 L1238.6 469.4 L1240.2 469.2 L1241.7 469.1 L1243.2 469.0 L1244.7 469.1 L1246.3 469.1 L1247.8 469.2 L1249.3 469.3 L1250.8 469.4 L1252.4 469.4 L1253.9 469.6 L1255.4 469.5 L1256.9 469.7 L1258.5 469.6 L1260.0 469.6 L1261.5 469.6 L1263.0 469.8 L1264.6 469.8 L1266.1 469.8 L1267.6 469.8 L1269.1 469.8 L1270.7 469.9 L1272.2 470.0 L1273.7 470.1 L1275.2 470.1 L1276.8 469.9 L1278.3 469.7 L1279.8 469.6 L1281.3 469.8 L1282.9 469.9 L1284.4 470.1 L1285.9 470.0 L1287.4 470.2 L1289.0 470.4 L1290.5 470.5 L1292.0 470.4 L1293.5 470.4 L1295.1 470.4 L1296.6 470.4 L1298.1 470.6 L1299.6 470.6 L1301.2 470.7 L1302.7 470.7 L1304.2 470.8 L1305.7 470.7 L1307.3 470.7 L1308.8 470.7 L1310.3 470.8 L1311.8 470.7 L1313.4 470.5 L1314.9 470.2 L1316.4 469.9 L1317.9 470.0 L1319.5 470.2 L1321.0 470.5 L1322.5 470.6 L1324.0 470.8 L1325.6 471.1 L1327.1 471.1 L1328.6 471.3 L1330.1 471.3 L1331.7 471.2 L1333.2 471.3 L1334.7 471.3 L1336.2 471.4 L1337.8 471.4 L1339.3 471.5 L1340.8 471.5 L1342.3 471.5 L1343.9 471.6 L1345.4 471.5 L1346.9 471.6 L1348.4 471.6 L1350.0 471.4 L1351.5 471.3 L1353.0 471.4 L1354.5 471.5 L1356.1 471.5 L1357.6 471.6 L1359.1 471.7 L1360.6 471.8 L1362.2 471.8 L1363.7 471.9 L1365.2 471.9 L1366.7 472.1 L1368.3 472.0 L1369.8 472.2 L1371.3 472.1 L1372.8 472.1 L1374.4 472.2 L1375.9 472.2 L1377.4 472.2 L1378.9 472.3 L1380.5 472.2 L1382.0 472.4 L1383.5 472.4 L1385.0 472.4 L1386.6 472.2 L1388.1 471.8 L1389.6 471.6 L1391.1 471.7 L1392.7 471.9 L1394.2 472.0 L1395.7 472.3 L1397.2 472.3 L1398.8 472.5 L1400.3 472.6 L1401.8 472.8 L1403.3 472.8 L1404.9 472.8 L1406.4 473.0 L1407.9 472.9 L1409.4 472.9 L1411.0 472.9 L1412.5 473.0 L1414.0 473.1 L1415.5 473.1 L1417.1 473.0 L1418.6 473.0 L1420.1 473.0 L1421.6 473.1 L1423.2 473.0 L1424.7 472.9 L1426.2 472.7 L1427.7 472.7 L1429.3 472.9 L1430.8 473.0 L1432.3 473.0 L1433.8 473.1 L1435.4 473.2 L1436.9 473.2 L1438.4 473.2 L1439.9 473.2 L1441.5 473.3 L1443.0 473.4 L1444.5 473.3 L1446.0 473.3 L1447.6 473.3 L1449.1 473.4 L1450.6 473.4 L1452.1 473.4 L1453.7 473.4 L1455.2 473.4 L1456.7 473.6 L1458.2 473.6 L1459.8 473.3 L1461.3 473.3 L1462.8 473.1 L1464.3 473.1 L1465.9 473.3 L1467.4 473.4 L1468.9 473.5 L1470.4 473.6 L1472.0 473.6 L1473.5 473.7 L1475.0 473.7 L1476.5 473.7 L1478.1 473.7 L1479.6 473.7 L1481.1 473.8 L1482.6 473.9 L1484.2 473.9 L1485.7 473.9 L1487.2 474.0 L1488.7 474.0 L1490.3 473.9 L1491.8 474.0 L1493.3 474.0 L1494.8 474.0 L1496.4 473.9 L1497.9 473.5 L1499.4 473.3 L1500.9 473.4 L1502.5 473.5 L1504.0 473.6 L1505.5 473.8 L1507.0 474.0 L1508.6 474.1 L1510.1 474.2 L1511.6 474.3 L1513.1 474.3 L1514.7 474.3 L1516.2 474.3 L1517.7 474.3 L1519.2 474.3 L1520.8 474.3 L1522.3 474.3 L1523.8 474.4 L1525.3 474.5 L1526.9 474.5 L1528.4 474.4 L1529.9 474.4 L1531.4 474.4 L1533.0 474.2 L1534.5 473.9 L1536.0 473.8 L1537.5 473.9 L1539.1 473.9 L1540.6 474.1 L1542.1 474.3 L1543.6 474.4 L1545.2 474.5 L1546.7 474.7 L1548.2 474.6 L1549.7 474.7 L1551.3 474.7 L1552.8 474.8 L1554.3 474.9 L1555.8 474.9 L1557.4 474.8 L1558.9 474.8 L1560.4 474.9 L1561.9 474.9 L1563.5 474.9 L1565.0 475.0 L1566.5 475.0 L1568.0 474.9 L1569.6 474.8 L1571.1 474.7 L1572.6 474.4 L1574.1 474.5 L1575.7 474.6 L1577.2 474.8 L1578.7 474.8 L1580.2 475.0 L1581.8 475.0 L1583.3 475.0 L1584.8 475.1 L1586.3 475.1 L1587.9 475.1 L1589.4 475.1 L1590.9 475.2 L1592.4 475.3 L1594.0 475.3 L1595.5 475.2 L1597.0 475.2 L1598.5 475.4 L1600.1 475.5 L1601.6 475.4 L1603.1 475.4 L1604.6 475.4 L1606.2 475.3 L1607.7 475.2 L1609.2 475.1 L1610.7 475.2 L1612.3 475.3 L1613.8 475.4 L1615.3 475.4 L1616.8 475.5 L1618.4 475.5 L1619.9 475.7 L1621.4 475.6 L1622.9 475.7 L1624.5 475.8 L1626.0 475.8 L1627.5 475.8 L1629.0 475.7 L1630.6 475.8 L1632.1 475.7 L1633.6 475.8 L1635.1 475.8 L1636.7 475.9 L1638.2 475.8 L1639.7 475.8 L1641.2 475.8 L1642.8 475.7 L1644.3 475.4 L1645.8 475.2 L1647.3 475.4 L1648.9 475.4 L1650.4 475.5 L1651.9 475.7 L1653.4 475.8 L1655.0 475.9 L1656.5 476.0 L1658.0 476.1 L1659.5 476.1 L1661.1 476.2 L1662.6 476.3 L1664.1 476.2 L1665.6 476.3 L1667.2 476.3 L1668.7 476.4 L1670.2 476.2 L1671.7 476.3 L1673.3 476.4 L1674.8 476.3 L1676.3 476.2 L1677.8 476.3 L1679.4 476.2 L1680.9 476.0" stroke="#2fc25b"/>
<path d="M621.0 460.3 L622.5 460.5 L624.0 461.0 L625.6 461.5 L627.1 462.0 L628.6 462.5 L630.1 463.0 L631.7 463.3 L633.2 463.5 L634.7 464.0 L636.2 464.1 L637.8 464.4 L639.3 464.7 L640.8 464.7 L642.3 464.8 L643.9 464.9 L645.4 465.0 L646.9 464.9 L648.4 465.0 L650.0 465.0 L651.5 465.0 L653.0 464.9 L654.5 464.4 L656.1 464.0 L657.6 463.7 L659.1 463.7 L660.6 464.0 L662.2 464.2 L663.7 464.4 L665.2 464.7 L666.7 465.0 L668.3 465.0 L669.8 465.1 L671.3 465.1 L672.8 465.2 L674.4 465.3 L675.9 465.2 L677.4 465.4 L678.9 465.3 L680.5 465.3 L682.0 465.3 L683.5 465.3 L685.0 465.5 L686.6 465.5 L688.1 465.5 L689.6 465.3 L691.1 464.8 L692.7 464.2 L694.2 463.9 L695.7 464.0 L697.2 464.3 L698.8 464.4 L700.3 464.8 L701.8 465.2 L703.3 465.4 L704.9 465.4 L706.4 465.5 L707.9 465.5 L709.4 465.5 L711.0 465.7 L712.5 465.8 L714.0 465.8 L715.5 465.9 L717.1 465.9 L718.6 465.9 L720.1 465.9 L721.6 465.9 L723.2 465.9 L724.7 465.9 L726.2 465.7 L727.7 464.9 L729.3 463.7 L730.8 463.0 L732.3 463.3 L733.8 463.5 L735.4 464.0 L736.9 464.5 L738.4 465.1 L739.9 465.6 L741.5 465.9 L743.0 466.0 L744.5 466.2 L746.0 466.2 L747.6 466.2 L749.1 466.2 L750.6 466.2 L752.1 466.2 L753.7 466.2 L755.2 466.2 L756.7 466.3 L758.2 466.4 L759.8 466.3 L761.3 466.3 L762.8 466.1 L764.3 465.6 L765.9 465.0 L767.4 464.6 L768.9 464.8 L770.4 465.0 L772.0 465.2 L773.5 465.5 L775.0 465.9 L776.5 466.3 L778.1 466.5 L779.6 466.6 L781.1 466.6 L782.6 466.5 L784.2 466.6 L785.7 466.6 L787.2 466.6 L788.7 466.5 L790.3 466.5 L791.8 466.7 L793.3 466.6 L794.8 466.8 L796.4 466.7 L797.9 466.8 L799.4 466.6 L800.9 466.2 L802.5 465.8 L804.0 465.4 L805.5 465.6 L807.0 465.7 L808.6 465.9 L810.1 466.3 L811.6 466.6 L813.1 466.9 L814.7 467.0 L816.2 466.9 L817.7 467.0 L819.2 467.1 L820.8 467.1 L822.3 467.2 L823.8 467.1 L825.3 467.3 L826.9 467.3 L828.4 467.1 L829.9 467.1 L831.4 467.2 L833.0 467.3 L834.5 467.2 L836.0 466.9 L837.5 466.2 L839.1 464.8 L840.6 464.3 L842.1 464.4 L843.6 464.7 L845.2 465.3 L846.7 466.0 L848.2 466.5 L849.7 467.0 L851.3 467.2 L852.8 467.5 L854.3 467.6 L855.8 467.7 L857.4 467.8 L858.9 467.7 L860.4 467.7 L861.9 467.8 L863.5 468.0 L865.0 468.0 L866.5 468.0 L868.0 467.9 L869.6 467.8 L871.1 468.0 L872.6 467.8 L874.1 467.1 L875.7 465.8 L877.2 465.1 L878.7 465.4 L880.2 465.8 L881.8 466.3 L883.3 466.8 L884.8 467.3 L886.3 467.8 L887.9 468.0 L889.4 468.2 L890.9 468.3 L892.4 468.4 L894.0 468.5 L895.5 468.4 L897.0 468.3 L898.5 468.3 L900.1 468.4 L901.6 468.5 L903.1 468.6 L904.6 468.7 L906.2 468.5 L907.7 468.6 L909.2 468.6 L910.7 468.3 L912.3 467.6 L913.8 467.2 L915.3 467.4 L916.8 467.7 L918.4 467.9 L919.9 468.3 L921.4 468.4 L922.9 468.5 L924.5 468.7 L926.0 468.9 L927.5 468.9 L929.0 469.0 L930.6 469.1 L932.1 469.0 L933.6 469.1 L935.1 469.1 L936.7 469.1 L938.2 469.1 L939.7 469.1 L941.2 469.2 L942.8 469.3 L944.3 469.2 L945.8 468.9 L947.3 468.2 L948.9 466.9 L950.4 466.1 L951.9 466.3 L953.4 466.9 L955.0 467.5 L956.5 468.0 L958.0 468.5 L959.5 469.0 L961.1 469.1 L962.6 469.3 L964.1 469.4 L965.6 469.6 L967.2 469.6 L968.7 469.6 L970.2 469.7 L971.7 469.7 L973.3 469.6 L974.8 469.6 L976.3 469.8 L977.8 469.8 L979.4 469.7 L980.9 469.8 L982.4 469.7 L983.9 469.0 L985.5 468.0 L987.0 467.4 L988.5 467.6 L990.0 467.8 L991.6 468.2 L993.1 468.9 L994.6 469.4 L996.1 469.7 L997.7 470.0 L999.2 470.0 L1000.7 470.2 L1002.2 470.2 L1003.8 470.4 L1005.3 470.4 L1006.8 470.5 L1008.3 470.5 L1009.9 470.4 L1011.4 470.3 L1012.9 470.3 L1014.4 470.3 L1016.0 470.3 L1017.5 470.3 L1019.0 470.2 L1020.5 469.6 L1022.1 468.3 L1023.6 467.8 L1025.1 468.0 L1026.6 468.2 L1028.2 468.8 L1029.7 469.3 L1031.2 469.7 L1032.7 470.3 L1034.3 470.5 L1035.8 470.7 L1037.3 470.8 L1038.8 471.0 L1040.4 471.0 L1041.9 471.0 L1043.4 471.0 L1044.9 470.9 L1046.5 471.1 L1048.0 471.2 L1049.5 471.1 L1051.0 471.0 L1052.6 471.0 L1054.1 471.0 L1055.6 471.0 L1057.1 470.4 L1058.7 469.3 L1060.2 468.6 L1061.7 468.8 L1063.2 469.2 L1064.8 469.7 L1066.3 470.3 L1067.8 470.5 L1069.3 470.8 L1070.9 471.2 L1072.4 471.4 L1073.9 471.5 L1075.4 471.5 L1077.0 471.6 L1078.5 471.6 L1080.0 471.5 L1081.5 471.5 L1083.1 471.5 L1084.6 471.5 L1086.1 471.6 L1087.6 471.6 L1089.2 471.6 L1090.7 471.6 L1092.2 471.5 L1093.7 470.6 L1095.3 469.4 L1096.8 468.6 L1098.3 468.7 L1099.8 469.3 L1101.4 469.8 L1102.9 470.6 L1104.4 471.2 L1105.9 471.6 L1107.5 471.7 L1109.0 471.9 L1110.5 471.9 L1112.0 472.2 L1113.6 472.3 L1115.1 472.3 L1116.6 472.3 L1118.1 472.2 L1119.7 472.3 L1121.2 472.3 L1122.7 472.4 L1124.2 472.3 L1125.8 472.3 L1127.3 472.2 L1128.8 472.1 L1130.4 471.4 L1131.9 470.1 L1133.4 469.6 L1134.9 469.7 L1136.5 470.1 L1138.0 470.6 L1139.5 471.1 L1141.0 471.8 L1142.6 472.1 L1144.1 472.3 L1145.6 472.5 L1147.1 472.6 L1148.7 472.8 L1150.2 472.7 L1151.7 472.9 L1153.2 472.8 L1154.8 473.0 L1156.3 473.0 L1157.8 472.9 L1159.3 472.9 L1160.9 472.9 L1162.4 472.9 L1163.9 472.9 L1165.4 472.7 L1167.0 472.1 L1168.5 470.9 L1170.0 470.3 L1171.5 470.3 L1173.1 470.6 L1174.6 471.3 L1176.1 471.8 L1177.6 472.4 L1179.2 472.7 L1180.7 473.1 L1182.2 473.2 L1183.7 473.4 L1185.3 473.4 L1186.8 473.4 L1188.3 473.3 L1189.8 473.6 L1191.4 473.6 L1192.9 473.6 L1194.4 473.6 L1195.9 473.8 L1197.5 473.7 L1199.0 473.8 L1200.5 473.7 L1202.0 473.6 L1203.6 473.4 L1205.1 472.8 L1206.6 472.4 L1208.1 472.5 L1209.7 472.7 L1211.2 473.1 L1212.7 473.4 L1214.2 473.7 L1215.8 473.9 L1217.3 474.1 L1218.8 474.3 L1220.3 474.4 L1221.9 474.5 L1223.4 474.4 L1224.9 474.4 L1226.4 474.5 L1228.0 474.5 L1229.5 474.6 L1231.0 474.6 L1232.5 474.7 L1234.1 474.7 L1235.6 474.8 L1237.1 474.9 L1238.6 474.6 L1240.2 473.8 L1241.7 472.9 L1243.2 472.3 L1244.7 472.5 L1246.3 472.8 L1247.8 473.2 L1249.3 473.9 L1250.8 474.3 L1252.4 474.6 L1253.9 474.9 L1255.4 475.1 L1256.9 475.1 L1258.5 475.3 L1260.0 475.4 L1261.5 475.4 L1263.0 475.4 L1264.6 475.5 L1266.1 475.7 L1267.6 475.7 L1269.1 475.7 L1270.7 475.8 L1272.2 475.7 L1273.7 475.8 L1275.2 475.5 L1276.8 475.1 L1278.3 474.2 L1279.8 473.7 L1281.3 473.8 L1282.9 474.1 L1284.4 474.6 L1285.9 474.9 L1287.4 475.5 L1289.0 475.7 L1290.5 475.9 L1292.0 476.0 L1293.5 476.1 L1295.1 476.3 L1296.6 476.3 L1298.1 476.3 L1299.6 476.4 L1301.2 476.4 L1302.7 476.4 L1304.2 476.5 L1305.7 476.6 L1307.3 476.7 L1308.8 476.7 L1310.3 476.6 L1311.8 476.6 L1313.4 475.9 L1314.9 474.6 L1316.4 473.9 L1317.9 474.2 L1319.5 474.6 L1321.0 475.1 L1322.5 475.6 L1324.0 476.2 L1325.6 476.5 L1327.1 476.9 L1328.6 477.2 L1330.1 477.2 L1331.7 477.3 L1333.2 477.4 L1334.7 477.3 L1336.2 477.5 L1337.8 477.6 L1339.3 477.5 L1340.8 477.5 L1342.3 477.7 L1343.9 477.7 L1345.4 477.7 L1346.9 477.8 L1348.4 477.7 L1350.0 477.1 L1351.5 476.2 L1353.0 475.7 L1354.5 475.9 L1356.1 476.3 L1357.6 476.7 L1359.1 477.2 L1360.6 477.6 L1362.2 477.9 L1363.7 477.9 L1365.2 478.1 L1366.7 478.3 L1368.3 478.4 L1369.8 478.3 L1371.3 478.3 L1372.8 478.4 L1374.4 478.4 L1375.9 478.5 L1377.4 478.4 L1378.9 478.5 L1380.5 478.6 L1382.0 478.5 L1383.5 478.5 L1385.0 478.4 L1386.6 477.7 L1388.1 476.5 L1389.6 475.8 L1391.1 476.0 L1392.7 476.5 L1394.2 477.1 L1395.7 477.5 L1397.2 478.1 L1398.8 478.5 L1400.3 478.8 L1401.8 479.0 L1403.3 479.1 L1404.9 479.3 L1406.4 479.4 L1407.9 479.3 L1409.4 479.3 L1411.0 479.3 L1412.5 479.5 L1414.0 479.4 L1415.5 479.3 L1417.1 479.4 L1418.6 479.3 L1420.1 479.4 L1421.6 479.3 L1423.2 478.7 L1424.7 477.6 L1426.2 477.1 L1427.7 477.3 L1429.3 477.5 L1430.8 477.9 L1432.3 478.3 L1433.8 478.7 L1435.4 479.1 L1436.9 479.3 L1438.4 479.4 L1439.9 479.5 L1441.5 479.6 L1443.0 479.8 L1444.5 479.8 L1446.0 479.8 L1447.6 479.8 L1449.1 479.7 L1450.6 479.8 L1452.1 479.8 L1453.7 479.8 L1455.2 479.9 L1456.7 479.8 L1458.2 479.7 L1459.8 479.2 L1461.3 478.5 L1462.8 478.2 L1464.3 478.3 L1465.9 478.6 L1467.4 478.8 L1468.9 479.1 L1470.4 479.5 L1472.0 479.7 L1473.5 479.9 L1475.0 480.0 L1476.5 480.0 L1478.1 480.2 L1479.6 480.1 L1481.1 480.2 L1482.6 480.1 L1484.2 480.0 L1485.7 480.2 L1487.2 480.2 L1488.7 480.1 L1490.3 480.2 L1491.8 480.2 L1493.3 480.3 L1494.8 480.1 L1496.4 479.6 L1497.9 479.1 L1499.4 478.8 L1500.9 478.8 L1502.5 479.0 L1504.0 479.3 L1505.5 479.7 L1507.0 480.0 L1508.6 480.3 L1510.1 480.4 L1511.6 480.5 L1513.1 480.6 L1514.7 480.6 L1516.2 480.7 L1517.7 480.6 L1519.2 480.7 L1520.8 480.7 L1522.3 480.8 L1523.8 480.6 L1525.3 480.7 L1526.9 480.6 L1528.4 480.7 L1529.9 480.7 L1531.4 480.6 L1533.0 480.4 L1534.5 479.8 L1536.0 479.4 L1537.5 479.5 L1539.1 479.8 L1540.6 480.0 L1542.1 480.2 L1543.6 480.4 L1545.2 480.6 L1546.7 480.8 L1548.2 480.8 L1549.7 480.8 L1551.3 480.9 L1552.8 480.9 L1554.3 480.9 L1555.8 481.0 L1557.4 481.1 L1558.9 481.1 L1560.4 481.0 L1561.9 481.0 L1563.5 481.0 L1565.0 481.0 L1566.5 481.0 L1568.0 480.9 L1569.6 480.2 L1571.1 479.5 L1572.6 478.9 L1574.1 479.1 L1575.7 479.5 L1577.2 479.9 L1578.7 480.2 L1580.2 480.6 L1581.8 481.0 L1583.3 481.0 L1584.8 481.1 L1586.3 481.2 L1587.9 481.3 L1589.4 481.5 L1590.9 481.5 L1592.4 481.5 L1594.0 481.6 L1595.5 481.5 L1597.0 481.5 L1598.5 481.5 L1600.1 481.5 L1601.6 481.5 L1603.1 481.5 L1604.6 481.4 L1606.2 481.2 L1607.7 480.7 L1609.2 480.4 L1610.7 480.4 L1612.3 480.6 L1613.8 480.8 L1615.3 481.1 L1616.8 481.3 L1618.4 481.6 L1619.9 481.8 L1621.4 481.7 L1622.9 481.7 L1624.5 481.8 L1626.0 481.9 L1627.5 481.8 L1629.0 481.8 L1630.6 481.9 L1632.1 481.8 L1633.6 481.8 L1635.1 482.0 L1636.7 482.0 L1638.2 482.0 L1639.7 481.8 L1641.2 481.8 L1642.8 481.3 L1644.3 480.4 L1645.8 480.0 L1647.3 480.1 L1648.9 480.3 L1650.4 480.6 L1651.9 481.0 L1653.4 481.4 L1655.0 481.7 L1656.5 481.8 L1658.0 481.9 L1659.5 482.1 L1661.1 482.2 L1662.6 482.2 L1664.1 482.3 L1665.6 482.3 L1667.2 482.2 L1668.7 482.2 L1670.2 482.3 L1671.7 482.3 L1673.3 482.3 L1674.8 482.2 L1676.3 482.2 L1677.8 482.3 L1679.4 481.9 L1680.9 481.4" stroke="#facc14"/>
<path d="M621 694.9 H1681.2" stroke="#223273" stroke-width="2.4" stroke-linecap="butt"/>
<path d="M621 694.9 H1681.2" stroke="#8543e0" stroke-width="2.6" stroke-linecap="butt"/>
<path d="M621.0 493.3 L622.5 493.5 L624.0 493.6 L625.6 493.9 L627.1 494.0 L628.6 494.2 L630.1 494.2 L631.7 494.2 L633.2 494.4 L634.7 494.6 L636.2 494.5 L637.8 494.6 L639.3 494.7 L640.8 494.6 L642.3 494.6 L643.9 494.8 L645.4 494.7 L646.9 494.9 L648.4 494.7 L650.0 494.7 L651.5 494.8 L653.0 494.6 L654.5 494.3 L656.1 494.0 L657.6 493.7 L659.1 493.9 L660.6 493.9 L662.2 494.1 L663.7 494.3 L665.2 494.5 L666.7 494.9 L668.3 494.9 L669.8 495.1 L671.3 495.0 L672.8 495.1 L674.4 495.1 L675.9 495.2 L677.4 495.1 L678.9 495.1 L680.5 495.3 L682.0 495.3 L683.5 495.3 L685.0 495.3 L686.6 495.3 L688.1 495.3 L689.6 495.1 L691.1 495.0 L692.7 494.5 L694.2 494.2 L695.7 494.4 L697.2 494.5 L698.8 494.7 L700.3 495.1 L701.8 495.2 L703.3 495.4 L704.9 495.7 L706.4 495.9 L707.9 495.8 L709.4 495.8 L711.0 495.9 L712.5 495.9 L714.0 496.1 L715.5 495.9 L717.1 496.1 L718.6 496.1 L720.1 496.0 L721.6 496.0 L723.2 496.0 L724.7 496.1 L726.2 496.0 L727.7 496.0 L729.3 495.6 L730.8 495.4 L732.3 495.3 L733.8 495.6 L735.4 495.7 L736.9 496.0 L738.4 496.0 L739.9 496.2 L741.5 496.4 L743.0 496.4 L744.5 496.5 L746.0 496.5 L747.6 496.6 L749.1 496.6 L750.6 496.6 L752.1 496.6 L753.7 496.5 L755.2 496.5 L756.7 496.8 L758.2 496.7 L759.8 496.8 L761.3 496.7 L762.8 496.7 L764.3 496.3 L765.9 495.8 L767.4 495.5 L768.9 495.5 L770.4 495.7 L772.0 496.0 L773.5 496.2 L775.0 496.6 L776.5 496.8 L778.1 496.9 L779.6 497.2 L781.1 497.3 L782.6 497.4 L784.2 497.5 L785.7 497.3 L787.2 497.2 L788.7 497.2 L790.3 497.3 L791.8 497.4 L793.3 497.4 L794.8 497.4 L796.4 497.5 L797.9 497.6 L799.4 497.4 L800.9 497.2 L802.5 496.6 L804.0 496.4 L805.5 496.4 L807.0 496.5 L808.6 497.0 L810.1 497.3 L811.6 497.5 L813.1 497.5 L814.7 497.5 L816.2 497.6 L817.7 497.7 L819.2 497.8 L820.8 497.8 L822.3 497.8 L823.8 497.8 L825.3 498.0 L826.9 497.9 L828.4 498.1 L829.9 498.2 L831.4 498.2 L833.0 498.1 L834.5 498.1 L836.0 498.1 L837.5 497.6 L839.1 496.7 L840.6 496.5 L842.1 496.7 L843.6 496.8 L845.2 497.1 L846.7 497.6 L848.2 497.9 L849.7 498.0 L851.3 498.2 L852.8 498.3 L854.3 498.5 L855.8 498.5 L857.4 498.7 L858.9 498.8 L860.4 498.6 L861.9 498.7 L863.5 498.7 L865.0 498.8 L866.5 498.9 L868.0 498.8 L869.6 498.7 L871.1 498.9 L872.6 498.8 L874.1 498.6 L875.7 498.1 L877.2 497.8 L878.7 498.0 L880.2 498.1 L881.8 498.3 L883.3 498.4 L884.8 498.8 L886.3 498.9 L887.9 499.1 L889.4 499.3 L890.9 499.2 L892.4 499.3 L894.0 499.2 L895.5 499.3 L897.0 499.5 L898.5 499.4 L900.1 499.4 L901.6 499.6 L903.1 499.6 L904.6 499.6 L906.2 499.5 L907.7 499.4 L909.2 499.4 L910.7 499.2 L912.3 498.7 L913.8 498.5 L915.3 498.5 L916.8 498.8 L918.4 499.1 L919.9 499.2 L921.4 499.4 L922.9 499.6 L924.5 499.7 L926.0 499.9 L927.5 499.9 L929.0 499.8 L930.6 500.0 L932.1 499.9 L933.6 499.9 L935.1 499.9 L936.7 500.0 L938.2 500.0 L939.7 500.1 L941.2 500.0 L942.8 500.0 L944.3 500.1 L945.8 500.0 L947.3 499.9 L948.9 499.7 L950.4 499.3 L951.9 499.3 L953.4 499.5 L955.0 499.5 L956.5 499.6 L958.0 499.8 L959.5 499.9 L961.1 500.1 L962.6 500.2 L964.1 500.1 L965.6 500.1 L967.2 500.2 L968.7 500.2 L970.2 500.2 L971.7 500.1 L973.3 500.1 L974.8 500.4 L976.3 500.4 L977.8 500.3 L979.4 500.4 L980.9 500.5 L982.4 500.4 L983.9 500.1 L985.5 499.8 L987.0 499.7 L988.5 499.6 L990.0 499.8 L991.6 499.8 L993.1 500.2 L994.6 500.4 L996.1 500.5 L997.7 500.7 L999.2 500.7 L1000.7 500.6 L1002.2 500.5 L1003.8 500.5 L1005.3 500.4 L1006.8 500.6 L1008.3 500.8 L1009.9 500.7 L1011.4 500.6 L1012.9 500.7 L1014.4 500.8 L1016.0 500.9 L1017.5 500.7 L1019.0 500.7 L1020.5 500.4 L1022.1 499.8 L1023.6 499.3 L1025.1 499.3 L1026.6 499.6 L1028.2 499.8 L1029.7 500.1 L1031.2 500.4 L1032.7 500.6 L1034.3 500.9 L1035.8 500.8 L1037.3 500.8 L1038.8 500.9 L1040.4 501.0 L1041.9 501.1 L1043.4 501.1 L1044.9 501.2 L1046.5 501.3 L1048.0 501.2 L1049.5 501.1 L1051.0 501.0 L1052.6 501.0 L1054.1 501.1 L1055.6 500.9 L1057.1 500.9 L1058.7 500.5 L1060.2 500.4 L1061.7 500.6 L1063.2 500.6 L1064.8 500.6 L1066.3 500.8 L1067.8 500.9 L1069.3 501.1 L1070.9 501.1 L1072.4 501.3 L1073.9 501.4 L1075.4 501.5 L1077.0 501.4 L1078.5 501.3 L1080.0 501.4 L1081.5 501.4 L1083.1 501.4 L1084.6 501.4 L1086.1 501.4 L1087.6 501.5 L1089.2 501.6 L1090.7 501.6 L1092.2 501.4 L1093.7 501.2 L1095.3 500.9 L1096.8 500.8 L1098.3 500.9 L1099.8 500.9 L1101.4 501.0 L1102.9 501.1 L1104.4 501.3 L1105.9 501.6 L1107.5 501.8 L1109.0 501.8 L1110.5 501.9 L1112.0 501.9 L1113.6 501.9 L1115.1 501.9 L1116.6 501.7 L1118.1 501.8 L1119.7 501.8 L1121.2 501.7 L1122.7 501.8 L1124.2 501.9 L1125.8 501.9 L1127.3 501.9 L1128.8 501.8 L1130.4 501.5 L1131.9 501.4 L1133.4 501.0 L1134.9 501.0 L1136.5 501.3 L1138.0 501.4 L1139.5 501.5 L1141.0 501.7 L1142.6 501.8 L1144.1 501.9 L1145.6 502.0 L1147.1 502.0 L1148.7 502.1 L1150.2 502.0 L1151.7 502.0 L1153.2 501.9 L1154.8 502.1 L1156.3 502.2 L1157.8 502.0 L1159.3 502.2 L1160.9 502.1 L1162.4 502.0 L1163.9 502.1 L1165.4 502.0 L1167.0 501.7 L1168.5 501.3 L1170.0 500.9 L1171.5 501.1 L1173.1 501.1 L1174.6 501.4 L1176.1 501.7 L1177.6 501.8 L1179.2 502.0 L1180.7 502.1 L1182.2 502.2 L1183.7 502.4 L1185.3 502.5 L1186.8 502.5 L1188.3 502.6 L1189.8 502.4 L1191.4 502.6 L1192.9 502.7 L1194.4 502.5 L1195.9 502.7 L1197.5 502.6 L1199.0 502.6 L1200.5 502.7 L1202.0 502.6 L1203.6 502.3 L1205.1 501.5 L1206.6 501.2 L1208.1 501.2 L1209.7 501.4 L1211.2 501.7 L1212.7 501.9 L1214.2 502.4 L1215.8 502.5 L1217.3 502.7 L1218.8 502.9 L1220.3 503.0 L1221.9 503.1 L1223.4 503.2 L1224.9 503.3 L1226.4 503.2 L1228.0 503.3 L1229.5 503.4 L1231.0 503.2 L1232.5 503.3 L1234.1 503.2 L1235.6 503.4 L1237.1 503.4 L1238.6 503.3 L1240.2 502.8 L1241.7 502.3 L1243.2 502.1 L1244.7 502.3 L1246.3 502.5 L1247.8 502.5 L1249.3 502.9 L1250.8 503.0 L1252.4 503.3 L1253.9 503.5 L1255.4 503.5 L1256.9 503.7 L1258.5 503.8 L1260.0 503.7 L1261.5 503.6 L1263.0 503.7 L1264.6 503.8 L1266.1 503.9 L1267.6 503.7 L1269.1 503.7 L1270.7 503.7 L1272.2 503.9 L1273.7 503.8 L1275.2 503.8 L1276.8 503.3 L1278.3 502.8 L1279.8 502.4 L1281.3 502.4 L1282.9 502.8 L1284.4 503.1 L1285.9 503.5 L1287.4 503.8 L1289.0 504.1 L1290.5 504.0 L1292.0 504.1 L1293.5 504.1 L1295.1 504.2 L1296.6 504.4 L1298.1 504.5 L1299.6 504.3 L1301.2 504.3 L1302.7 504.5 L1304.2 504.5 L1305.7 504.5 L1307.3 504.5 L1308.8 504.4 L1310.3 504.6 L1311.8 504.5 L1313.4 504.5 L1314.9 504.2 L1316.4 503.9 L1317.9 504.0 L1319.5 504.0 L1321.0 504.4 L1322.5 504.5 L1324.0 504.5 L1325.6 504.5 L1327.1 504.7 L1328.6 504.8 L1330.1 504.9 L1331.7 504.9 L1333.2 504.9 L1334.7 504.8 L1336.2 504.9 L1337.8 504.9 L1339.3 504.9 L1340.8 505.0 L1342.3 505.2 L1343.9 505.0 L1345.4 505.0 L1346.9 505.1 L1348.4 505.1 L1350.0 504.9 L1351.5 504.8 L1353.0 504.6 L1354.5 504.7 L1356.1 504.8 L1357.6 505.1 L1359.1 505.3 L1360.6 505.2 L1362.2 505.3 L1363.7 505.5 L1365.2 505.6 L1366.7 505.7 L1368.3 505.7 L1369.8 505.7 L1371.3 505.6 L1372.8 505.6 L1374.4 505.7 L1375.9 505.8 L1377.4 505.9 L1378.9 505.9 L1380.5 505.8 L1382.0 505.9 L1383.5 505.9 L1385.0 505.7 L1386.6 505.4 L1388.1 504.7 L1389.6 504.4 L1391.1 504.4 L1392.7 504.5 L1394.2 504.9 L1395.7 505.2 L1397.2 505.7 L1398.8 505.8 L1400.3 505.9 L1401.8 506.0 L1403.3 506.0 L1404.9 506.0 L1406.4 506.0 L1407.9 506.0 L1409.4 506.2 L1411.0 506.2 L1412.5 506.2 L1414.0 506.2 L1415.5 506.1 L1417.1 506.1 L1418.6 506.0 L1420.1 506.0 L1421.6 506.0 L1423.2 505.8 L1424.7 505.4 L1426.2 505.3 L1427.7 505.3 L1429.3 505.5 L1430.8 505.6 L1432.3 505.6 L1433.8 505.7 L1435.4 505.9 L1436.9 506.2 L1438.4 506.1 L1439.9 506.2 L1441.5 506.2 L1443.0 506.3 L1444.5 506.1 L1446.0 506.1 L1447.6 506.3 L1449.1 506.1 L1450.6 506.1 L1452.1 506.0 L1453.7 506.0 L1455.2 506.0 L1456.7 506.1 L1458.2 505.9 L1459.8 505.5 L1461.3 504.9 L1462.8 504.6 L1464.3 504.8 L1465.9 505.0 L1467.4 505.1 L1468.9 505.5 L1470.4 505.8 L1472.0 506.0 L1473.5 505.9 L1475.0 506.1 L1476.5 506.2 L1478.1 506.1 L1479.6 506.0 L1481.1 506.0 L1482.6 506.1 L1484.2 506.2 L1485.7 506.2 L1487.2 506.3 L1488.7 506.1 L1490.3 506.1 L1491.8 506.2 L1493.3 506.2 L1494.8 506.0 L1496.4 505.8 L1497.9 505.3 L1499.4 504.9 L1500.9 505.0 L1502.5 505.1 L1504.0 505.4 L1505.5 505.5 L1507.0 505.7 L1508.6 505.9 L1510.1 505.9 L1511.6 506.0 L1513.1 505.9 L1514.7 506.1 L1516.2 506.1 L1517.7 506.2 L1519.2 506.0 L1520.8 506.1 L1522.3 506.1 L1523.8 506.1 L1525.3 505.9 L1526.9 505.9 L1528.4 505.9 L1529.9 506.0 L1531.4 505.9 L1533.0 505.8 L1534.5 505.5 L1536.0 505.3 L1537.5 505.3 L1539.1 505.4 L1540.6 505.6 L1542.1 505.8 L1543.6 505.8 L1545.2 506.0 L1546.7 505.9 L1548.2 506.1 L1549.7 506.1 L1551.3 506.2 L1552.8 506.0 L1554.3 506.1 L1555.8 506.2 L1557.4 506.1 L1558.9 506.0 L1560.4 506.0 L1561.9 506.2 L1563.5 506.0 L1565.0 505.9 L1566.5 505.9 L1568.0 505.9 L1569.6 505.8 L1571.1 505.3 L1572.6 505.3 L1574.1 505.1 L1575.7 505.3 L1577.2 505.3 L1578.7 505.4 L1580.2 505.5 L1581.8 505.6 L1583.3 505.8 L1584.8 505.9 L1586.3 505.9 L1587.9 506.1 L1589.4 506.0 L1590.9 505.9 L1592.4 505.8 L1594.0 506.0 L1595.5 506.1 L1597.0 506.0 L1598.5 505.8 L1600.1 506.0 L1601.6 505.9 L1603.1 506.1 L1604.6 506.0 L1606.2 505.8 L1607.7 505.4 L1609.2 505.4 L1610.7 505.4 L1612.3 505.4 L1613.8 505.6 L1615.3 505.6 L1616.8 505.8 L1618.4 505.7 L1619.9 505.9 L1621.4 505.9 L1622.9 506.0 L1624.5 505.9 L1626.0 505.9 L1627.5 505.9 L1629.0 506.1 L1630.6 506.1 L1632.1 506.1 L1633.6 505.9 L1635.1 505.9 L1636.7 505.8 L1638.2 505.9 L1639.7 505.8 L1641.2 505.6 L1642.8 505.3 L1644.3 504.7 L1645.8 504.2 L1647.3 504.4 L1648.9 504.5 L1650.4 504.8 L1651.9 505.0 L1653.4 505.5 L1655.0 505.8 L1656.5 505.8 L1658.0 505.9 L1659.5 506.0 L1661.1 505.9 L1662.6 505.9 L1664.1 505.9 L1665.6 506.0 L1667.2 505.9 L1668.7 505.9 L1670.2 506.0 L1671.7 505.9 L1673.3 505.9 L1674.8 506.0 L1676.3 505.9 L1677.8 505.9 L1679.4 505.4 L1680.9 505.0" stroke="#13c2c2"/>
<path d="M621.0 450.4 L622.5 450.4 L624.0 450.7 L625.6 451.0 L627.1 451.4 L628.6 451.7 L630.1 452.1 L631.7 452.2 L633.2 452.6 L634.7 452.7 L636.2 452.7 L637.8 452.9 L639.3 453.1 L640.8 453.4 L642.3 453.4 L643.9 453.4 L645.4 453.7 L646.9 453.8 L648.4 453.8 L650.0 453.7 L651.5 453.6 L653.0 453.6 L654.5 453.3 L656.1 453.1 L657.6 453.1 L659.1 453.1 L660.6 453.3 L662.2 453.4 L663.7 453.4 L665.2 453.7 L666.7 453.9 L668.3 454.0 L669.8 454.0 L671.3 454.1 L672.8 454.3 L674.4 454.3 L675.9 454.3 L677.4 454.2 L678.9 454.2 L680.5 454.2 L682.0 454.4 L683.5 454.3 L685.0 454.3 L686.6 454.3 L688.1 454.2 L689.6 454.3 L691.1 453.8 L692.7 453.4 L694.2 453.2 L695.7 453.2 L697.2 453.4 L698.8 453.6 L700.3 453.8 L701.8 454.0 L703.3 454.2 L704.9 454.5 L706.4 454.7 L707.9 454.8 L709.4 454.7 L711.0 454.8 L712.5 454.7 L714.0 454.8 L715.5 454.8 L717.1 454.8 L718.6 455.0 L720.1 454.8 L721.6 455.0 L723.2 455.1 L724.7 455.0 L726.2 454.9 L727.7 454.7 L729.3 453.9 L730.8 453.6 L732.3 453.8 L733.8 453.9 L735.4 454.3 L736.9 454.5 L738.4 454.8 L739.9 455.0 L741.5 455.2 L743.0 455.2 L744.5 455.3 L746.0 455.4 L747.6 455.3 L749.1 455.4 L750.6 455.4 L752.1 455.5 L753.7 455.5 L755.2 455.6 L756.7 455.6 L758.2 455.6 L759.8 455.5 L761.3 455.5 L762.8 455.6 L764.3 455.4 L765.9 455.1 L767.4 455.0 L768.9 455.1 L770.4 455.1 L772.0 455.2 L773.5 455.5 L775.0 455.6 L776.5 455.8 L778.1 455.9 L779.6 456.1 L781.1 456.1 L782.6 455.9 L784.2 456.0 L785.7 456.1 L787.2 456.2 L788.7 456.0 L790.3 456.0 L791.8 456.0 L793.3 456.0 L794.8 456.1 L796.4 456.2 L797.9 456.3 L799.4 456.2 L800.9 456.0 L802.5 455.9 L804.0 456.0 L805.5 456.0 L807.0 456.0 L808.6 456.1 L810.1 456.3 L811.6 456.5 L813.1 456.4 L814.7 456.5 L816.2 456.5 L817.7 456.6 L819.2 456.5 L820.8 456.6 L822.3 456.6 L823.8 456.6 L825.3 456.5 L826.9 456.6 L828.4 456.7 L829.9 456.6 L831.4 456.6 L833.0 456.8 L834.5 456.8 L836.0 456.7 L837.5 456.6 L839.1 456.5 L840.6 456.2 L842.1 456.4 L843.6 456.6 L845.2 456.5 L846.7 456.7 L848.2 456.9 L849.7 457.0 L851.3 457.0 L852.8 456.9 L854.3 457.0 L855.8 457.0 L857.4 457.1 L858.9 457.1 L860.4 457.1 L861.9 457.2 L863.5 457.3 L865.0 457.2 L866.5 457.2 L868.0 457.2 L869.6 457.3 L871.1 457.2 L872.6 457.2 L874.1 456.9 L875.7 456.2 L877.2 455.9 L878.7 455.9 L880.2 456.0 L881.8 456.4 L883.3 456.6 L884.8 456.9 L886.3 457.1 L887.9 457.4 L889.4 457.5 L890.9 457.3 L892.4 457.4 L894.0 457.5 L895.5 457.5 L897.0 457.6 L898.5 457.5 L900.1 457.5 L901.6 457.7 L903.1 457.6 L904.6 457.6 L906.2 457.6 L907.7 457.7 L909.2 457.7 L910.7 457.6 L912.3 457.3 L913.8 457.1 L915.3 457.2 L916.8 457.3 L918.4 457.5 L919.9 457.6 L921.4 457.6 L922.9 457.6 L924.5 457.6 L926.0 457.8 L927.5 457.7 L929.0 457.6 L930.6 457.8 L932.1 457.9 L933.6 457.8 L935.1 457.9 L936.7 458.0 L938.2 458.0 L939.7 457.8 L941.2 458.0 L942.8 458.0 L944.3 458.0 L945.8 458.0 L947.3 457.7 L948.9 457.2 L950.4 456.6 L951.9 456.7 L953.4 456.9 L955.0 457.0 L956.5 457.5 L958.0 457.7 L959.5 457.8 L961.1 457.9 L962.6 458.0 L964.1 458.2 L965.6 458.2 L967.2 458.3 L968.7 458.2 L970.2 458.1 L971.7 458.2 L973.3 458.3 L974.8 458.4 L976.3 458.5 L977.8 458.4 L979.4 458.3 L980.9 458.2 L982.4 458.3 L983.9 458.1 L985.5 457.9 L987.0 457.8 L988.5 457.9 L990.0 457.9 L991.6 458.2 L993.1 458.2 L994.6 458.4 L996.1 458.5 L997.7 458.4 L999.2 458.4 L1000.7 458.5 L1002.2 458.5 L1003.8 458.6 L1005.3 458.6 L1006.8 458.6 L1008.3 458.7 L1009.9 458.6 L1011.4 458.7 L1012.9 458.8 L1014.4 458.8 L1016.0 458.8 L1017.5 458.9 L1019.0 458.7 L1020.5 458.5 L1022.1 457.8 L1023.6 457.6 L1025.1 457.7 L1026.6 457.7 L1028.2 458.1 L1029.7 458.2 L1031.2 458.5 L1032.7 458.6 L1034.3 458.9 L1035.8 458.9 L1037.3 459.1 L1038.8 459.0 L1040.4 459.1 L1041.9 459.1 L1043.4 459.0 L1044.9 459.0 L1046.5 459.1 L1048.0 459.0 L1049.5 459.2 L1051.0 459.1 L1052.6 459.0 L1054.1 458.9 L1055.6 459.1 L1057.1 459.1 L1058.7 458.8 L1060.2 458.7 L1061.7 458.7 L1063.2 458.9 L1064.8 459.0 L1066.3 459.0 L1067.8 459.0 L1069.3 459.2 L1070.9 459.1 L1072.4 459.3 L1073.9 459.3 L1075.4 459.3 L1077.0 459.4 L1078.5 459.3 L1080.0 459.4 L1081.5 459.3 L1083.1 459.5 L1084.6 459.4 L1086.1 459.6 L1087.6 459.4 L1089.2 459.6 L1090.7 459.7 L1092.2 459.5 L1093.7 459.2 L1095.3 459.0 L1096.8 459.0 L1098.3 458.9 L1099.8 459.1 L1101.4 459.1 L1102.9 459.3 L1104.4 459.5 L1105.9 459.6 L1107.5 459.7 L1109.0 459.6 L1110.5 459.8 L1112.0 459.7 L1113.6 459.8 L1115.1 460.0 L1116.6 460.0 L1118.1 459.9 L1119.7 459.8 L1121.2 459.8 L1122.7 459.9 L1124.2 459.9 L1125.8 460.0 L1127.3 459.8 L1128.8 459.8 L1130.4 459.6 L1131.9 459.1 L1133.4 458.9 L1134.9 458.8 L1136.5 458.9 L1138.0 459.1 L1139.5 459.5 L1141.0 459.8 L1142.6 459.8 L1144.1 460.1 L1145.6 460.0 L1147.1 460.1 L1148.7 460.3 L1150.2 460.2 L1151.7 460.3 L1153.2 460.3 L1154.8 460.1 L1156.3 460.1 L1157.8 460.2 L1159.3 460.1 L1160.9 460.3 L1162.4 460.2 L1163.9 460.3 L1165.4 460.2 L1167.0 460.0 L1168.5 459.9 L1170.0 459.7 L1171.5 459.8 L1173.1 460.0 L1174.6 460.1 L1176.1 460.2 L1177.6 460.1 L1179.2 460.3 L1180.7 460.3 L1182.2 460.4 L1183.7 460.4 L1185.3 460.5 L1186.8 460.5 L1188.3 460.5 L1189.8 460.6 L1191.4 460.5 L1192.9 460.5 L1194.4 460.7 L1195.9 460.7 L1197.5 460.8 L1199.0 460.9 L1200.5 460.8 L1202.0 460.7 L1203.6 460.4 L1205.1 460.3 L1206.6 460.0 L1208.1 460.1 L1209.7 460.3 L1211.2 460.3 L1212.7 460.5 L1214.2 460.6 L1215.8 460.8 L1217.3 461.0 L1218.8 461.0 L1220.3 461.0 L1221.9 461.1 L1223.4 461.0 L1224.9 461.0 L1226.4 461.1 L1228.0 461.3 L1229.5 461.3 L1231.0 461.4 L1232.5 461.2 L1234.1 461.4 L1235.6 461.4 L1237.1 461.5 L1238.6 461.4 L1240.2 461.0 L1241.7 460.4 L1243.2 460.2 L1244.7 460.1 L1246.3 460.3 L1247.8 460.5 L1249.3 460.8 L1250.8 461.1 L1252.4 461.3 L1253.9 461.6 L1255.4 461.6 L1256.9 461.7 L1258.5 461.7 L1260.0 461.8 L1261.5 461.9 L1263.0 461.9 L1264.6 461.8 L1266.1 461.8 L1267.6 461.9 L1269.1 462.1 L1270.7 461.9 L1272.2 462.0 L1273.7 462.1 L1275.2 462.1 L1276.8 461.7 L1278.3 461.3 L1279.8 461.0 L1281.3 461.2 L1282.9 461.1 L1284.4 461.5 L1285.9 461.7 L1287.4 461.9 L1289.0 461.9 L1290.5 462.1 L1292.0 462.3 L1293.5 462.4 L1295.1 462.3 L1296.6 462.3 L1298.1 462.3 L1299.6 462.3 L1301.2 462.3 L1302.7 462.4 L1304.2 462.6 L1305.7 462.8 L1307.3 462.8 L1308.8 462.7 L1310.3 462.7 L1311.8 462.6 L1313.4 462.4 L1314.9 461.8 L1316.4 461.5 L1317.9 461.4 L1319.5 461.7 L1321.0 462.1 L1322.5 462.4 L1324.0 462.4 L1325.6 462.7 L1327.1 462.8 L1328.6 462.8 L1330.1 463.0 L1331.7 463.1 L1333.2 463.2 L1334.7 463.0 L1336.2 463.2 L1337.8 463.3 L1339.3 463.4 L1340.8 463.3 L1342.3 463.4 L1343.9 463.4 L1345.4 463.4 L1346.9 463.3 L1348.4 463.3 L1350.0 462.9 L1351.5 462.4 L1353.0 461.9 L1354.5 462.2 L1356.1 462.3 L1357.6 462.7 L1359.1 462.8 L1360.6 463.2 L1362.2 463.4 L1363.7 463.4 L1365.2 463.6 L1366.7 463.6 L1368.3 463.5 L1369.8 463.6 L1371.3 463.6 L1372.8 463.7 L1374.4 463.8 L1375.9 463.9 L1377.4 463.9 L1378.9 463.8 L1380.5 463.9 L1382.0 464.0 L1383.5 464.0 L1385.0 464.1 L1386.6 464.0 L1388.1 463.7 L1389.6 463.4 L1391.1 463.6 L1392.7 463.8 L1394.2 463.8 L1395.7 463.9 L1397.2 464.1 L1398.8 464.2 L1400.3 464.1 L1401.8 464.1 L1403.3 464.1 L1404.9 464.1 L1406.4 464.3 L1407.9 464.3 L1409.4 464.3 L1411.0 464.3 L1412.5 464.3 L1414.0 464.3 L1415.5 464.3 L1417.1 464.5 L1418.6 464.5 L1420.1 464.4 L1421.6 464.3 L1423.2 464.1 L1424.7 463.9 L1426.2 463.8 L1427.7 463.9 L1429.3 464.1 L1430.8 464.0 L1432.3 464.3 L1433.8 464.3 L1435.4 464.5 L1436.9 464.5 L1438.4 464.5 L1439.9 464.7 L1441.5 464.7 L1443.0 464.6 L1444.5 464.8 L1446.0 464.8 L1447.6 464.9 L1449.1 464.8 L1450.6 464.8 L1452.1 464.9 L1453.7 464.9 L1455.2 465.0 L1456.7 464.8 L1458.2 464.8 L1459.8 464.4 L1461.3 463.9 L1462.8 463.5 L1464.3 463.5 L1465.9 463.9 L1467.4 464.1 L1468.9 464.5 L1470.4 464.6 L1472.0 464.7 L1473.5 464.8 L1475.0 464.9 L1476.5 465.1 L1478.1 465.1 L1479.6 465.1 L1481.1 465.2 L1482.6 465.3 L1484.2 465.3 L1485.7 465.1 L1487.2 465.2 L1488.7 465.2 L1490.3 465.3 L1491.8 465.3 L1493.3 465.3 L1494.8 465.2 L1496.4 464.9 L1497.9 464.4 L1499.4 464.2 L1500.9 464.4 L1502.5 464.5 L1504.0 464.6 L1505.5 465.0 L1507.0 465.0 L1508.6 465.3 L1510.1 465.4 L1511.6 465.5 L1513.1 465.5 L1514.7 465.6 L1516.2 465.7 L1517.7 465.7 L1519.2 465.7 L1520.8 465.5 L1522.3 465.5 L1523.8 465.4 L1525.3 465.7 L1526.9 465.8 L1528.4 465.6 L1529.9 465.6 L1531.4 465.6 L1533.0 465.4 L1534.5 465.2 L1536.0 465.2 L1537.5 465.3 L1539.1 465.3 L1540.6 465.5 L1542.1 465.5 L1543.6 465.6 L1545.2 465.7 L1546.7 465.9 L1548.2 465.9 L1549.7 466.0 L1551.3 466.0 L1552.8 465.9 L1554.3 466.1 L1555.8 466.1 L1557.4 466.1 L1558.9 466.0 L1560.4 465.9 L1561.9 466.0 L1563.5 466.1 L1565.0 466.2 L1566.5 466.0 L1568.0 465.9 L1569.6 465.7 L1571.1 465.4 L1572.6 465.1 L1574.1 465.2 L1575.7 465.3 L1577.2 465.4 L1578.7 465.5 L1580.2 465.7 L1581.8 465.9 L1583.3 466.2 L1584.8 466.4 L1586.3 466.2 L1587.9 466.2 L1589.4 466.4 L1590.9 466.3 L1592.4 466.3 L1594.0 466.3 L1595.5 466.2 L1597.0 466.2 L1598.5 466.3 L1600.1 466.3 L1601.6 466.5 L1603.1 466.4 L1604.6 466.3 L1606.2 466.3 L1607.7 466.0 L1609.2 465.9 L1610.7 466.0 L1612.3 466.1 L1613.8 466.1 L1615.3 466.2 L1616.8 466.4 L1618.4 466.5 L1619.9 466.6 L1621.4 466.7 L1622.9 466.8 L1624.5 466.7 L1626.0 466.6 L1627.5 466.8 L1629.0 466.8 L1630.6 466.7 L1632.1 466.8 L1633.6 466.7 L1635.1 466.8 L1636.7 466.7 L1638.2 466.9 L1639.7 466.9 L1641.2 466.8 L1642.8 466.7 L1644.3 466.2 L1645.8 465.9 L1647.3 465.9 L1648.9 466.1 L1650.4 466.4 L1651.9 466.6 L1653.4 466.7 L1655.0 466.9 L1656.5 466.9 L1658.0 466.9 L1659.5 467.0 L1661.1 467.2 L1662.6 467.2 L1664.1 467.2 L1665.6 467.3 L1667.2 467.2 L1668.7 467.3 L1670.2 467.3 L1671.7 467.2 L1673.3 467.2 L1674.8 467.3 L1676.3 467.2 L1677.8 467.1 L1679.4 467.1 L1680.9 466.9" stroke="#3436c7"/>
<path d="M621.0 503.5 L622.5 503.7 L624.0 503.7 L625.6 503.8 L627.1 504.0 L628.6 504.2 L630.1 504.5 L631.7 504.8 L633.2 504.9 L634.7 504.8 L636.2 504.9 L637.8 504.8 L639.3 505.0 L640.8 504.9 L642.3 504.8 L643.9 504.9 L645.4 504.8 L646.9 504.9 L648.4 504.8 L650.0 504.9 L651.5 505.0 L653.0 505.1 L654.5 504.5 L656.1 504.2 L657.6 503.8 L659.1 503.8 L660.6 504.1 L662.2 504.3 L663.7 504.6 L665.2 504.9 L666.7 505.0 L668.3 505.3 L669.8 505.2 L671.3 505.5 L672.8 505.6 L674.4 505.5 L675.9 505.4 L677.4 505.5 L678.9 505.4 L680.5 505.5 L682.0 505.5 L683.5 505.4 L685.0 505.6 L686.6 505.7 L688.1 505.7 L689.6 505.5 L691.1 505.2 L692.7 504.5 L694.2 504.1 L695.7 504.4 L697.2 504.7 L698.8 505.0 L700.3 505.4 L701.8 505.5 L703.3 505.8 L704.9 505.7 L706.4 505.9 L707.9 505.8 L709.4 505.9 L711.0 506.1 L712.5 506.2 L714.0 506.1 L715.5 506.1 L717.1 506.0 L718.6 506.1 L720.1 506.1 L721.6 506.0 L723.2 506.2 L724.7 506.3 L726.2 506.2 L727.7 506.0 L729.3 505.8 L730.8 505.6 L732.3 505.6 L733.8 505.8 L735.4 506.0 L736.9 506.3 L738.4 506.5 L739.9 506.6 L741.5 506.7 L743.0 506.7 L744.5 506.8 L746.0 506.5 L747.6 506.5 L749.1 506.4 L750.6 506.7 L752.1 506.8 L753.7 506.8 L755.2 506.7 L756.7 506.7 L758.2 506.7 L759.8 506.8 L761.3 507.0 L762.8 506.8 L764.3 506.4 L765.9 506.0 L767.4 505.9 L768.9 506.2 L770.4 506.4 L772.0 506.5 L773.5 506.5 L775.0 506.6 L776.5 506.7 L778.1 507.0 L779.6 507.1 L781.1 507.3 L782.6 507.4 L784.2 507.4 L785.7 507.3 L787.2 507.4 L788.7 507.2 L790.3 507.2 L791.8 507.3 L793.3 507.3 L794.8 507.3 L796.4 507.3 L797.9 507.2 L799.4 507.4 L800.9 507.4 L802.5 507.2 L804.0 507.2 L805.5 507.1 L807.0 507.2 L808.6 507.2 L810.1 507.5 L811.6 507.7 L813.1 507.5 L814.7 507.5 L816.2 507.5 L817.7 507.7 L819.2 507.7 L820.8 507.6 L822.3 507.8 L823.8 508.0 L825.3 507.9 L826.9 507.8 L828.4 508.0 L829.9 508.0 L831.4 507.9 L833.0 507.9 L834.5 508.0 L836.0 508.1 L837.5 507.8 L839.1 507.4 L840.6 507.0 L842.1 507.1 L843.6 507.4 L845.2 507.5 L846.7 507.6 L848.2 507.9 L849.7 507.9 L851.3 508.0 L852.8 508.2 L854.3 508.3 L855.8 508.4 L857.4 508.5 L858.9 508.4 L860.4 508.3 L861.9 508.5 L863.5 508.3 L865.0 508.4 L866.5 508.5 L868.0 508.6 L869.6 508.7 L871.1 508.5 L872.6 508.6 L874.1 508.3 L875.7 507.8 L877.2 507.5 L878.7 507.8 L880.2 507.9 L881.8 507.9 L883.3 508.1 L884.8 508.6 L886.3 508.6 L887.9 508.7 L889.4 508.9 L890.9 509.1 L892.4 509.1 L894.0 509.1 L895.5 508.9 L897.0 508.8 L898.5 509.1 L900.1 509.2 L901.6 509.0 L903.1 508.9 L904.6 509.0 L906.2 509.2 L907.7 509.1 L909.2 509.1 L910.7 508.9 L912.3 508.2 L913.8 508.0 L915.3 507.9 L916.8 508.0 L918.4 508.1 L919.9 508.7 L921.4 508.8 L922.9 509.2 L924.5 509.4 L926.0 509.3 L927.5 509.5 L929.0 509.4 L930.6 509.5 L932.1 509.4 L933.6 509.6 L935.1 509.7 L936.7 509.8 L938.2 509.5 L939.7 509.7 L941.2 509.7 L942.8 509.8 L944.3 509.7 L945.8 509.6 L947.3 509.3 L948.9 508.8 L950.4 508.3 L951.9 508.3 L953.4 508.6 L955.0 508.8 L956.5 509.1 L958.0 509.2 L959.5 509.6 L961.1 509.5 L962.6 509.8 L964.1 510.0 L965.6 509.9 L967.2 509.8 L968.7 509.9 L970.2 509.8 L971.7 509.9 L973.3 509.8 L974.8 510.1 L976.3 510.1 L977.8 510.0 L979.4 509.9 L980.9 510.0 L982.4 510.1 L983.9 509.8 L985.5 509.1 L987.0 508.8 L988.5 508.9 L990.0 509.2 L991.6 509.3 L993.1 509.6 L994.6 510.0 L996.1 510.2 L997.7 510.0 L999.2 510.0 L1000.7 510.0 L1002.2 510.2 L1003.8 510.3 L1005.3 510.3 L1006.8 510.3 L1008.3 510.3 L1009.9 510.4 L1011.4 510.4 L1012.9 510.6 L1014.4 510.6 L1016.0 510.6 L1017.5 510.7 L1019.0 510.6 L1020.5 510.3 L1022.1 509.6 L1023.6 509.5 L1025.1 509.7 L1026.6 509.7 L1028.2 510.0 L1029.7 510.1 L1031.2 510.4 L1032.7 510.5 L1034.3 510.6 L1035.8 510.5 L1037.3 510.5 L1038.8 510.6 L1040.4 510.6 L1041.9 510.5 L1043.4 510.6 L1044.9 510.8 L1046.5 510.8 L1048.0 511.0 L1049.5 511.0 L1051.0 511.0 L1052.6 511.1 L1054.1 511.0 L1055.6 510.8 L1057.1 510.4 L1058.7 509.9 L1060.2 509.5 L1061.7 509.6 L1063.2 510.0 L1064.8 510.3 L1066.3 510.4 L1067.8 510.7 L1069.3 510.9 L1070.9 511.1 L1072.4 511.2 L1073.9 511.1 L1075.4 511.0 L1077.0 511.1 L1078.5 511.1 L1080.0 511.1 L1081.5 511.1 L1083.1 511.1 L1084.6 511.3 L1086.1 511.1 L1087.6 511.2 L1089.2 511.2 L1090.7 511.2 L1092.2 511.3 L1093.7 511.0 L1095.3 510.8 L1096.8 510.6 L1098.3 510.7 L1099.8 510.6 L1101.4 510.7 L1102.9 510.8 L1104.4 511.2 L1105.9 511.1 L1107.5 511.2 L1109.0 511.4 L1110.5 511.6 L1112.0 511.4 L1113.6 511.4 L1115.1 511.5 L1116.6 511.6 L1118.1 511.6 L1119.7 511.7 L1121.2 511.5 L1122.7 511.5 L1124.2 511.4 L1125.8 511.5 L1127.3 511.5 L1128.8 511.3 L1130.4 511.2 L1131.9 510.6 L1133.4 510.2 L1134.9 510.3 L1136.5 510.5 L1138.0 510.8 L1139.5 511.0 L1141.0 511.1 L1142.6 511.3 L1144.1 511.3 L1145.6 511.5 L1147.1 511.6 L1148.7 511.6 L1150.2 511.7 L1151.7 512.0 L1153.2 512.0 L1154.8 511.9 L1156.3 512.0 L1157.8 511.9 L1159.3 511.8 L1160.9 511.8 L1162.4 511.9 L1163.9 512.0 L1165.4 511.8 L1167.0 511.6 L1168.5 510.8 L1170.0 510.7 L1171.5 510.7 L1173.1 511.0 L1174.6 511.0 L1176.1 511.5 L1177.6 511.6 L1179.2 512.0 L1180.7 512.2 L1182.2 512.2 L1183.7 512.2 L1185.3 512.0 L1186.8 512.1 L1188.3 512.3 L1189.8 512.2 L1191.4 512.4 L1192.9 512.4 L1194.4 512.5 L1195.9 512.4 L1197.5 512.3 L1199.0 512.3 L1200.5 512.6 L1202.0 512.4 L1203.6 512.1 L1205.1 511.5 L1206.6 511.0 L1208.1 511.0 L1209.7 511.2 L1211.2 511.7 L1212.7 511.9 L1214.2 512.4 L1215.8 512.5 L1217.3 512.8 L1218.8 512.7 L1220.3 512.9 L1221.9 512.9 L1223.4 512.9 L1224.9 513.0 L1226.4 512.9 L1228.0 512.9 L1229.5 513.1 L1231.0 513.1 L1232.5 513.1 L1234.1 513.2 L1235.6 513.1 L1237.1 513.1 L1238.6 513.0 L1240.2 512.9 L1241.7 512.7 L1243.2 512.7 L1244.7 512.7 L1246.3 513.0 L1247.8 512.9 L1249.3 513.2 L1250.8 513.4 L1252.4 513.4 L1253.9 513.3 L1255.4 513.5 L1256.9 513.4 L1258.5 513.6 L1260.0 513.7 L1261.5 513.6 L1263.0 513.6 L1264.6 513.7 L1266.1 513.7 L1267.6 513.7 L1269.1 513.8 L1270.7 513.7 L1272.2 513.7 L1273.7 513.8 L1275.2 513.8 L1276.8 513.7 L1278.3 513.1 L1279.8 512.6 L1281.3 512.7 L1282.9 513.1 L1284.4 513.3 L1285.9 513.7 L1287.4 514.1 L1289.0 514.3 L1290.5 514.2 L1292.0 514.4 L1293.5 514.4 L1295.1 514.3 L1296.6 514.3 L1298.1 514.5 L1299.6 514.4 L1301.2 514.3 L1302.7 514.4 L1304.2 514.6 L1305.7 514.6 L1307.3 514.7 L1308.8 514.6 L1310.3 514.6 L1311.8 514.5 L1313.4 514.1 L1314.9 513.7 L1316.4 513.3 L1317.9 513.3 L1319.5 513.8 L1321.0 514.0 L1322.5 514.2 L1324.0 514.3 L1325.6 514.7 L1327.1 514.9 L1328.6 514.8 L1330.1 515.0 L1331.7 515.1 L1333.2 515.2 L1334.7 515.1 L1336.2 515.2 L1337.8 515.3 L1339.3 515.3 L1340.8 515.2 L1342.3 515.4 L1343.9 515.5 L1345.4 515.6 L1346.9 515.6 L1348.4 515.4 L1350.0 515.2 L1351.5 514.6 L1353.0 514.3 L1354.5 514.5 L1356.1 514.8 L1357.6 514.8 L1359.1 515.0 L1360.6 515.1 L1362.2 515.4 L1363.7 515.4 L1365.2 515.5 L1366.7 515.8 L1368.3 515.8 L1369.8 516.0 L1371.3 515.9 L1372.8 516.0 L1374.4 515.8 L1375.9 516.1 L1377.4 516.0 L1378.9 516.0 L1380.5 516.1 L1382.0 516.3 L1383.5 516.2 L1385.0 516.2 L1386.6 515.8 L1388.1 515.0 L1389.6 514.8 L1391.1 514.7 L1392.7 515.1 L1394.2 515.4 L1395.7 515.6 L1397.2 516.0 L1398.8 516.1 L1400.3 516.3 L1401.8 516.3 L1403.3 516.5 L1404.9 516.4 L1406.4 516.5 L1407.9 516.4 L1409.4 516.6 L1411.0 516.5 L1412.5 516.6 L1414.0 516.6 L1415.5 516.6 L1417.1 516.7 L1418.6 516.8 L1420.1 516.6 L1421.6 516.5 L1423.2 516.0 L1424.7 515.6 L1426.2 515.1 L1427.7 515.1 L1429.3 515.4 L1430.8 515.8 L1432.3 516.2 L1433.8 516.3 L1435.4 516.5 L1436.9 516.6 L1438.4 516.8 L1439.9 516.8 L1441.5 516.9 L1443.0 517.1 L1444.5 517.1 L1446.0 517.2 L1447.6 517.3 L1449.1 517.1 L1450.6 517.2 L1452.1 517.1 L1453.7 516.9 L1455.2 517.2 L1456.7 517.0 L1458.2 516.7 L1459.8 516.4 L1461.3 515.9 L1462.8 515.8 L1464.3 516.0 L1465.9 516.1 L1467.4 516.3 L1468.9 516.7 L1470.4 517.0 L1472.0 517.1 L1473.5 517.2 L1475.0 517.1 L1476.5 517.1 L1478.1 517.3 L1479.6 517.3 L1481.1 517.4 L1482.6 517.5 L1484.2 517.6 L1485.7 517.4 L1487.2 517.3 L1488.7 517.5 L1490.3 517.5 L1491.8 517.4 L1493.3 517.5 L1494.8 517.2 L1496.4 516.8 L1497.9 516.2 L1499.4 516.0 L1500.9 516.1 L1502.5 516.2 L1504.0 516.6 L1505.5 516.9 L1507.0 517.1 L1508.6 517.4 L1510.1 517.6 L1511.6 517.5 L1513.1 517.6 L1514.7 517.7 L1516.2 517.8 L1517.7 517.8 L1519.2 517.6 L1520.8 517.8 L1522.3 517.9 L1523.8 517.7 L1525.3 517.7 L1526.9 517.9 L1528.4 517.8 L1529.9 517.7 L1531.4 517.8 L1533.0 517.6 L1534.5 516.9 L1536.0 516.7 L1537.5 516.6 L1539.1 516.9 L1540.6 517.2 L1542.1 517.3 L1543.6 517.4 L1545.2 517.6 L1546.7 517.7 L1548.2 517.7 L1549.7 517.7 L1551.3 517.9 L1552.8 517.9 L1554.3 517.9 L1555.8 518.0 L1557.4 518.2 L1558.9 518.2 L1560.4 518.1 L1561.9 518.2 L1563.5 518.2 L1565.0 518.0 L1566.5 518.1 L1568.0 517.8 L1569.6 517.6 L1571.1 516.9 L1572.6 516.5 L1574.1 516.8 L1575.7 517.1 L1577.2 517.4 L1578.7 517.7 L1580.2 517.9 L1581.8 518.2 L1583.3 518.4 L1584.8 518.3 L1586.3 518.4 L1587.9 518.3 L1589.4 518.3 L1590.9 518.5 L1592.4 518.5 L1594.0 518.6 L1595.5 518.7 L1597.0 518.6 L1598.5 518.4 L1600.1 518.3 L1601.6 518.4 L1603.1 518.6 L1604.6 518.4 L1606.2 518.1 L1607.7 517.8 L1609.2 517.7 L1610.7 517.9 L1612.3 517.9 L1613.8 518.0 L1615.3 518.2 L1616.8 518.4 L1618.4 518.7 L1619.9 518.5 L1621.4 518.5 L1622.9 518.8 L1624.5 518.9 L1626.0 518.7 L1627.5 518.7 L1629.0 518.8 L1630.6 518.7 L1632.1 518.8 L1633.6 518.8 L1635.1 518.7 L1636.7 518.7 L1638.2 518.6 L1639.7 518.6 L1641.2 518.5 L1642.8 518.3 L1644.3 517.9 L1645.8 517.5 L1647.3 517.7 L1648.9 518.0 L1650.4 518.1 L1651.9 518.4 L1653.4 518.5 L1655.0 518.9 L1656.5 519.0 L1658.0 518.9 L1659.5 518.9 L1661.1 519.1 L1662.6 519.1 L1664.1 519.2 L1665.6 519.1 L1667.2 519.2 L1668.7 519.3 L1670.2 519.1 L1671.7 519.2 L1673.3 519.1 L1674.8 519.3 L1676.3 519.3 L1677.8 519.3 L1679.4 518.8 L1680.9 518.1" stroke="#f04864"/>
</g>
<g stroke="#fff" stroke-width="1.5" transform="translate(0,0.6)">
<circle cx="1184" cy="467.5" r="4.6" fill="#1890ff"/>
<circle cx="1184" cy="467.9" r="4.6" fill="#2fc25b"/>
<circle cx="1184" cy="472.7" r="4.6" fill="#facc14"/>
<circle cx="1184" cy="502.1" r="4.6" fill="#13c2c2"/>
<circle cx="1184" cy="460.1" r="4.6" fill="#3436c7"/>
<circle cx="1184" cy="511.8" r="4.6" fill="#f04864"/>
<circle cx="1184" cy="695.0" r="4.6" fill="#8543e0"/>
</g>
<rect x="621" y="738" width="1060" height="33" fill="#dfe6f5"/>
<path d="M621 771 L621.0 747.3 L622.6 747.8 L624.2 747.5 L625.8 747.8 L627.4 747.9 L629.0 747.1 L630.6 747.0 L632.2 748.2 L633.8 747.4 L635.4 747.3 L637.0 748.4 L638.6 747.7 L640.2 748.2 L641.8 747.7 L643.4 747.9 L645.0 747.2 L646.6 747.9 L648.2 748.2 L649.8 747.7 L651.4 748.0 L653.0 747.9 L654.6 747.1 L656.2 748.1 L657.8 747.8 L659.4 747.4 L661.0 747.0 L662.6 748.2 L664.2 747.7 L665.8 748.0 L667.4 748.2 L669.0 748.0 L670.6 748.3 L672.2 747.6 L673.8 748.1 L675.4 747.6 L677.0 748.3 L678.6 748.2 L680.2 747.1 L681.8 747.2 L683.4 747.3 L685.0 748.4 L686.6 747.6 L688.2 747.9 L689.8 747.4 L691.4 747.7 L693.0 747.5 L694.6 747.5 L696.2 747.8 L697.8 747.8 L699.4 748.3 L701.0 748.0 L702.6 748.3 L704.2 748.2 L705.8 748.4 L707.4 747.9 L709.0 747.2 L710.6 748.2 L712.2 748.4 L713.8 748.3 L715.4 747.8 L717.0 748.0 L718.6 747.3 L720.2 748.2 L721.8 747.8 L723.4 747.4 L725.0 747.1 L726.6 748.2 L728.2 748.4 L729.8 747.1 L731.4 748.1 L733.0 747.6 L734.6 747.2 L736.2 747.4 L737.8 748.1 L739.4 748.2 L741.0 747.1 L742.6 747.9 L744.2 747.1 L745.8 748.0 L747.4 747.5 L749.0 748.2 L750.6 748.4 L752.2 747.7 L753.8 748.4 L755.4 747.4 L757.0 747.1 L758.6 747.8 L760.2 747.0 L761.8 747.3 L763.4 747.6 L765.0 747.9 L766.6 747.2 L768.2 747.1 L769.8 748.2 L771.4 747.4 L773.0 748.3 L774.6 748.3 L776.2 747.5 L777.8 747.6 L779.4 747.7 L781.0 747.9 L782.6 747.8 L784.2 747.8 L785.8 747.9 L787.4 748.3 L789.0 747.7 L790.6 747.6 L792.2 748.0 L793.8 747.3 L795.4 747.4 L797.0 748.4 L798.6 747.7 L800.2 747.8 L801.8 747.0 L803.4 747.6 L805.0 747.8 L806.6 747.0 L808.2 747.9 L809.8 747.9 L811.4 747.1 L813.0 747.9 L814.6 747.7 L816.2 748.0 L817.8 747.5 L819.4 748.0 L821.0 748.0 L822.6 747.0 L824.2 747.1 L825.8 747.9 L827.4 748.3 L829.0 747.4 L830.6 747.6 L832.2 747.8 L833.8 747.4 L835.4 747.5 L837.0 747.4 L838.6 747.5 L840.2 747.8 L841.8 747.4 L843.4 747.5 L845.0 748.1 L846.6 747.0 L848.2 747.8 L849.8 748.0 L851.4 747.4 L853.0 747.3 L854.6 748.1 L856.2 747.3 L857.8 747.3 L859.4 747.6 L861.0 748.0 L862.6 747.1 L864.2 747.5 L865.8 747.5 L867.4 748.2 L869.0 747.6 L870.6 748.2 L872.2 747.2 L873.8 747.5 L875.4 747.9 L877.0 748.2 L878.6 747.6 L880.2 747.3 L881.8 747.2 L883.4 747.7 L885.0 747.3 L886.6 748.1 L888.2 748.2 L889.8 747.3 L891.4 747.4 L893.0 748.1 L894.6 747.9 L896.2 748.1 L897.8 747.5 L899.4 747.2 L901.0 747.4 L902.6 748.1 L904.2 747.4 L905.8 747.5 L907.4 747.6 L909.0 747.6 L910.6 747.6 L912.2 748.3 L913.8 747.2 L915.4 747.0 L917.0 748.3 L918.6 748.2 L920.2 748.4 L921.8 747.6 L923.4 748.3 L925.0 748.3 L926.6 747.3 L928.2 748.0 L929.8 748.2 L931.4 747.9 L933.0 747.7 L934.6 747.4 L936.2 747.5 L937.8 747.3 L939.4 747.1 L941.0 747.8 L942.6 747.4 L944.2 748.1 L945.8 747.1 L947.4 748.3 L949.0 748.0 L950.6 748.3 L952.2 748.3 L953.8 748.3 L955.4 747.8 L957.0 747.0 L958.6 748.0 L960.2 747.2 L961.8 747.4 L963.4 747.9 L965.0 747.7 L966.6 747.6 L968.2 748.3 L969.8 747.9 L971.4 747.5 L973.0 747.4 L974.6 748.2 L976.2 747.7 L977.8 748.1 L979.4 747.5 L981.0 747.3 L982.6 747.7 L984.2 748.1 L985.8 747.2 L987.4 748.1 L989.0 748.3 L990.6 748.1 L992.2 748.2 L993.8 747.0 L995.4 747.9 L997.0 748.2 L998.6 747.1 L1000.2 747.4 L1001.8 747.4 L1003.4 747.7 L1005.0 747.6 L1006.6 747.7 L1008.2 748.1 L1009.8 747.0 L1011.4 747.1 L1013.0 747.2 L1014.6 747.2 L1016.2 747.1 L1017.8 748.4 L1019.4 748.2 L1021.0 747.1 L1022.6 747.7 L1024.2 747.4 L1025.8 747.4 L1027.4 747.5 L1029.0 747.9 L1030.6 747.8 L1032.2 747.5 L1033.8 747.3 L1035.4 747.5 L1037.0 747.2 L1038.6 747.8 L1040.2 748.0 L1041.8 747.5 L1043.4 747.1 L1045.0 747.2 L1046.6 747.5 L1048.2 747.8 L1049.8 748.1 L1051.4 747.5 L1053.0 748.1 L1054.6 747.9 L1056.2 747.6 L1057.8 747.5 L1059.4 747.7 L1061.0 748.0 L1062.6 747.6 L1064.2 748.0 L1065.8 747.6 L1067.4 747.3 L1069.0 747.8 L1070.6 748.0 L1072.2 747.1 L1073.8 747.6 L1075.4 747.6 L1077.0 748.2 L1078.6 748.3 L1080.2 747.5 L1081.8 748.3 L1083.4 748.1 L1085.0 747.4 L1086.6 747.6 L1088.2 747.2 L1089.8 748.1 L1091.4 747.9 L1093.0 748.2 L1094.6 748.1 L1096.2 747.9 L1097.8 748.0 L1099.4 747.8 L1101.0 747.1 L1102.6 747.8 L1104.2 747.0 L1105.8 747.2 L1107.4 748.1 L1109.0 747.1 L1110.6 747.1 L1112.2 747.1 L1113.8 748.2 L1115.4 747.3 L1117.0 747.0 L1118.6 748.2 L1120.2 747.2 L1121.8 748.2 L1123.4 747.9 L1125.0 748.2 L1126.6 748.3 L1128.2 747.8 L1129.8 748.1 L1131.4 747.1 L1133.0 748.1 L1134.6 747.7 L1136.2 748.0 L1137.8 747.1 L1139.4 748.0 L1141.0 748.3 L1142.6 747.1 L1144.2 747.5 L1145.8 747.8 L1147.4 748.2 L1149.0 747.3 L1150.6 747.3 L1152.2 747.3 L1153.8 747.9 L1155.4 748.1 L1157.0 747.6 L1158.6 747.5 L1160.2 747.6 L1161.8 747.5 L1163.4 747.6 L1165.0 747.1 L1166.6 747.7 L1168.2 748.4 L1169.8 747.6 L1171.4 748.0 L1173.0 747.2 L1174.6 748.0 L1176.2 748.1 L1177.8 747.9 L1179.4 747.7 L1181.0 747.7 L1182.6 747.9 L1184.2 748.3 L1185.8 747.2 L1187.4 747.1 L1189.0 748.0 L1190.6 748.3 L1192.2 747.7 L1193.8 747.6 L1195.4 748.0 L1197.0 747.3 L1198.6 747.4 L1200.2 747.3 L1201.8 747.8 L1203.4 747.4 L1205.0 747.3 L1206.6 748.0 L1208.2 748.3 L1209.8 747.4 L1211.4 748.0 L1213.0 747.6 L1214.6 748.2 L1216.2 747.8 L1217.8 747.4 L1219.4 747.3 L1221.0 747.0 L1222.6 747.7 L1224.2 747.5 L1225.8 747.2 L1227.4 747.5 L1229.0 747.5 L1230.6 748.1 L1232.2 747.2 L1233.8 748.4 L1235.4 747.7 L1237.0 747.8 L1238.6 747.7 L1240.2 748.2 L1241.8 748.2 L1243.4 747.8 L1245.0 747.7 L1246.6 748.0 L1248.2 748.2 L1249.8 747.6 L1251.4 748.0 L1253.0 748.3 L1254.6 747.7 L1256.2 747.3 L1257.8 747.3 L1259.4 748.0 L1261.0 747.9 L1262.6 748.3 L1264.2 748.2 L1265.8 747.3 L1267.4 747.3 L1269.0 747.4 L1270.6 747.3 L1272.2 748.0 L1273.8 748.2 L1275.4 748.3 L1277.0 747.4 L1278.6 748.2 L1280.2 747.4 L1281.8 747.6 L1283.4 748.0 L1285.0 747.1 L1286.6 747.1 L1288.2 748.2 L1289.8 747.4 L1291.4 747.5 L1293.0 747.8 L1294.6 747.9 L1296.2 747.0 L1297.8 747.5 L1299.4 747.6 L1301.0 747.7 L1302.6 747.3 L1304.2 747.8 L1305.8 748.3 L1307.4 747.5 L1309.0 747.8 L1310.6 747.2 L1312.2 747.4 L1313.8 747.9 L1315.4 747.2 L1317.0 748.2 L1318.6 748.3 L1320.2 747.1 L1321.8 748.3 L1323.4 747.5 L1325.0 748.1 L1326.6 748.1 L1328.2 747.4 L1329.8 747.9 L1331.4 747.9 L1333.0 748.1 L1334.6 747.4 L1336.2 748.1 L1337.8 748.3 L1339.4 747.9 L1341.0 747.8 L1342.6 747.2 L1344.2 747.7 L1345.8 747.5 L1347.4 748.0 L1349.0 747.9 L1350.6 747.8 L1352.2 747.3 L1353.8 747.9 L1355.4 747.9 L1357.0 747.3 L1358.6 748.2 L1360.2 747.9 L1361.8 747.2 L1363.4 748.3 L1365.0 747.2 L1366.6 747.5 L1368.2 748.0 L1369.8 747.8 L1371.4 747.8 L1373.0 747.9 L1374.6 747.6 L1376.2 747.4 L1377.8 747.2 L1379.4 747.1 L1381.0 748.0 L1382.6 748.1 L1384.2 747.8 L1385.8 748.0 L1387.4 747.5 L1389.0 747.4 L1390.6 747.5 L1392.2 748.2 L1393.8 747.1 L1395.4 747.7 L1397.0 747.3 L1398.6 748.1 L1400.2 747.5 L1401.8 747.5 L1403.4 747.6 L1405.0 747.8 L1406.6 748.1 L1408.2 747.5 L1409.8 748.2 L1411.4 747.2 L1413.0 747.4 L1414.6 747.1 L1416.2 747.2 L1417.8 748.1 L1419.4 748.0 L1421.0 747.3 L1422.6 747.3 L1424.2 747.6 L1425.8 748.0 L1427.4 748.1 L1429.0 748.0 L1430.6 747.8 L1432.2 747.2 L1433.8 747.6 L1435.4 747.3 L1437.0 747.7 L1438.6 747.8 L1440.2 747.3 L1441.8 747.4 L1443.4 748.1 L1445.0 747.0 L1446.6 748.1 L1448.2 748.2 L1449.8 748.3 L1451.4 747.5 L1453.0 747.8 L1454.6 747.8 L1456.2 747.9 L1457.8 748.4 L1459.4 748.0 L1461.0 747.4 L1462.6 748.2 L1464.2 747.7 L1465.8 747.8 L1467.4 748.0 L1469.0 747.0 L1470.6 748.1 L1472.2 747.9 L1473.8 747.7 L1475.4 747.7 L1477.0 747.6 L1478.6 747.3 L1480.2 747.7 L1481.8 747.1 L1483.4 747.7 L1485.0 747.9 L1486.6 747.6 L1488.2 747.8 L1489.8 748.3 L1491.4 748.2 L1493.0 747.2 L1494.6 748.1 L1496.2 747.9 L1497.8 747.1 L1499.4 747.5 L1501.0 747.3 L1502.6 747.1 L1504.2 747.8 L1505.8 748.3 L1507.4 747.5 L1509.0 748.2 L1510.6 748.0 L1512.2 747.2 L1513.8 748.2 L1515.4 747.8 L1517.0 748.3 L1518.6 748.0 L1520.2 748.0 L1521.8 747.5 L1523.4 748.1 L1525.0 748.3 L1526.6 748.2 L1528.2 747.6 L1529.8 748.1 L1531.4 747.7 L1533.0 747.2 L1534.6 747.1 L1536.2 747.1 L1537.8 747.3 L1539.4 747.2 L1541.0 747.7 L1542.6 748.0 L1544.2 747.8 L1545.8 747.6 L1547.4 747.9 L1549.0 747.4 L1550.6 747.7 L1552.2 748.1 L1553.8 747.6 L1555.4 747.3 L1557.0 748.3 L1558.6 748.0 L1560.2 747.5 L1561.8 747.5 L1563.4 747.7 L1565.0 747.8 L1566.6 747.3 L1568.2 747.0 L1569.8 747.3 L1571.4 748.1 L1573.0 747.2 L1574.6 747.6 L1576.2 747.3 L1577.8 747.3 L1579.4 747.2 L1581.0 747.6 L1582.6 747.2 L1584.2 747.0 L1585.8 747.2 L1587.4 747.2 L1589.0 747.7 L1590.6 747.1 L1592.2 747.0 L1593.8 747.6 L1595.4 747.6 L1597.0 748.0 L1598.6 747.1 L1600.2 747.6 L1601.8 747.6 L1603.4 747.0 L1605.0 748.4 L1606.6 747.3 L1608.2 747.1 L1609.8 747.7 L1611.4 747.2 L1613.0 747.9 L1614.6 747.5 L1616.2 747.2 L1617.8 747.1 L1619.4 748.0 L1621.0 747.4 L1622.6 748.1 L1624.2 747.7 L1625.8 748.3 L1627.4 747.4 L1629.0 747.3 L1630.6 747.4 L1632.2 748.1 L1633.8 747.9 L1635.4 747.5 L1637.0 747.1 L1638.6 748.0 L1640.2 748.4 L1641.8 747.8 L1643.4 747.0 L1645.0 747.0 L1646.6 747.1 L1648.2 747.2 L1649.8 747.1 L1651.4 747.1 L1653.0 747.9 L1654.6 748.3 L1656.2 747.3 L1657.8 748.4 L1659.4 747.7 L1661.0 748.1 L1662.6 748.3 L1664.2 748.3 L1665.8 747.0 L1667.4 747.4 L1669.0 747.8 L1670.6 748.3 L1672.2 747.1 L1673.8 747.4 L1675.4 748.2 L1677.0 747.2 L1678.6 747.5 L1680.2 747.5 L1681 771 Z" fill="#c7d3ee"/>
<path d="M621 738.5 H1681" stroke="#c5d0ea" stroke-width="1"/>
<path d="M621.5 738 V771 M1681.5 738 V771" stroke="#a9b8de" stroke-width="1"/>
<rect x="618.8" y="747.5" width="4.4" height="15" rx="1.6" fill="#f4f6fb" stroke="#9aa6c4" stroke-width="1"/>
<rect x="1678.8" y="747.5" width="4.4" height="15" rx="1.6" fill="#f4f6fb" stroke="#9aa6c4" stroke-width="1"/>
<g font-size="15.85" fill="#666">
<text x="464" y="758.6">2022-06-01 12:53:17</text>
<text x="1690.6" y="758.6">2022-06-30 11:53:17</text>
</g>
</svg>
<div id="tip">
<div class="tt">2022-06-16 21:53:17</div>
<div class="tr" style="top:45px"><i style="background:#1890ff"></i><span>中间测点2</span><b>58.33</b></div>
<div class="tr" style="top:75px"><i style="background:#2fc25b"></i><span>中间测点1</span><b>58.22</b></div>
<div class="tr" style="top:105px"><i style="background:#facc14"></i><span>中间基准点</span><b>57.01</b></div>
<div class="tr" style="top:135px"><i style="background:#223273"></i><span>左边坡测点1</span><b>0</b></div>
<div class="tr" style="top:165px"><i style="background:#8543e0"></i><span>左边坡基准点</span><b>0</b></div>
<div class="tr" style="top:195px"><i style="background:#13c2c2"></i><span>左路基测点2</span><b>49.45</b></div>
<div class="tr" style="top:225px"><i style="background:#3436c7"></i><span>左路基测点1</span><b>60.22</b></div>
<div class="tr" style="top:255px"><i style="background:#f04864"></i><span>左路基基准点</span><b>46.98</b></div>
</div><!--/CHART-->
</body>
</html>
